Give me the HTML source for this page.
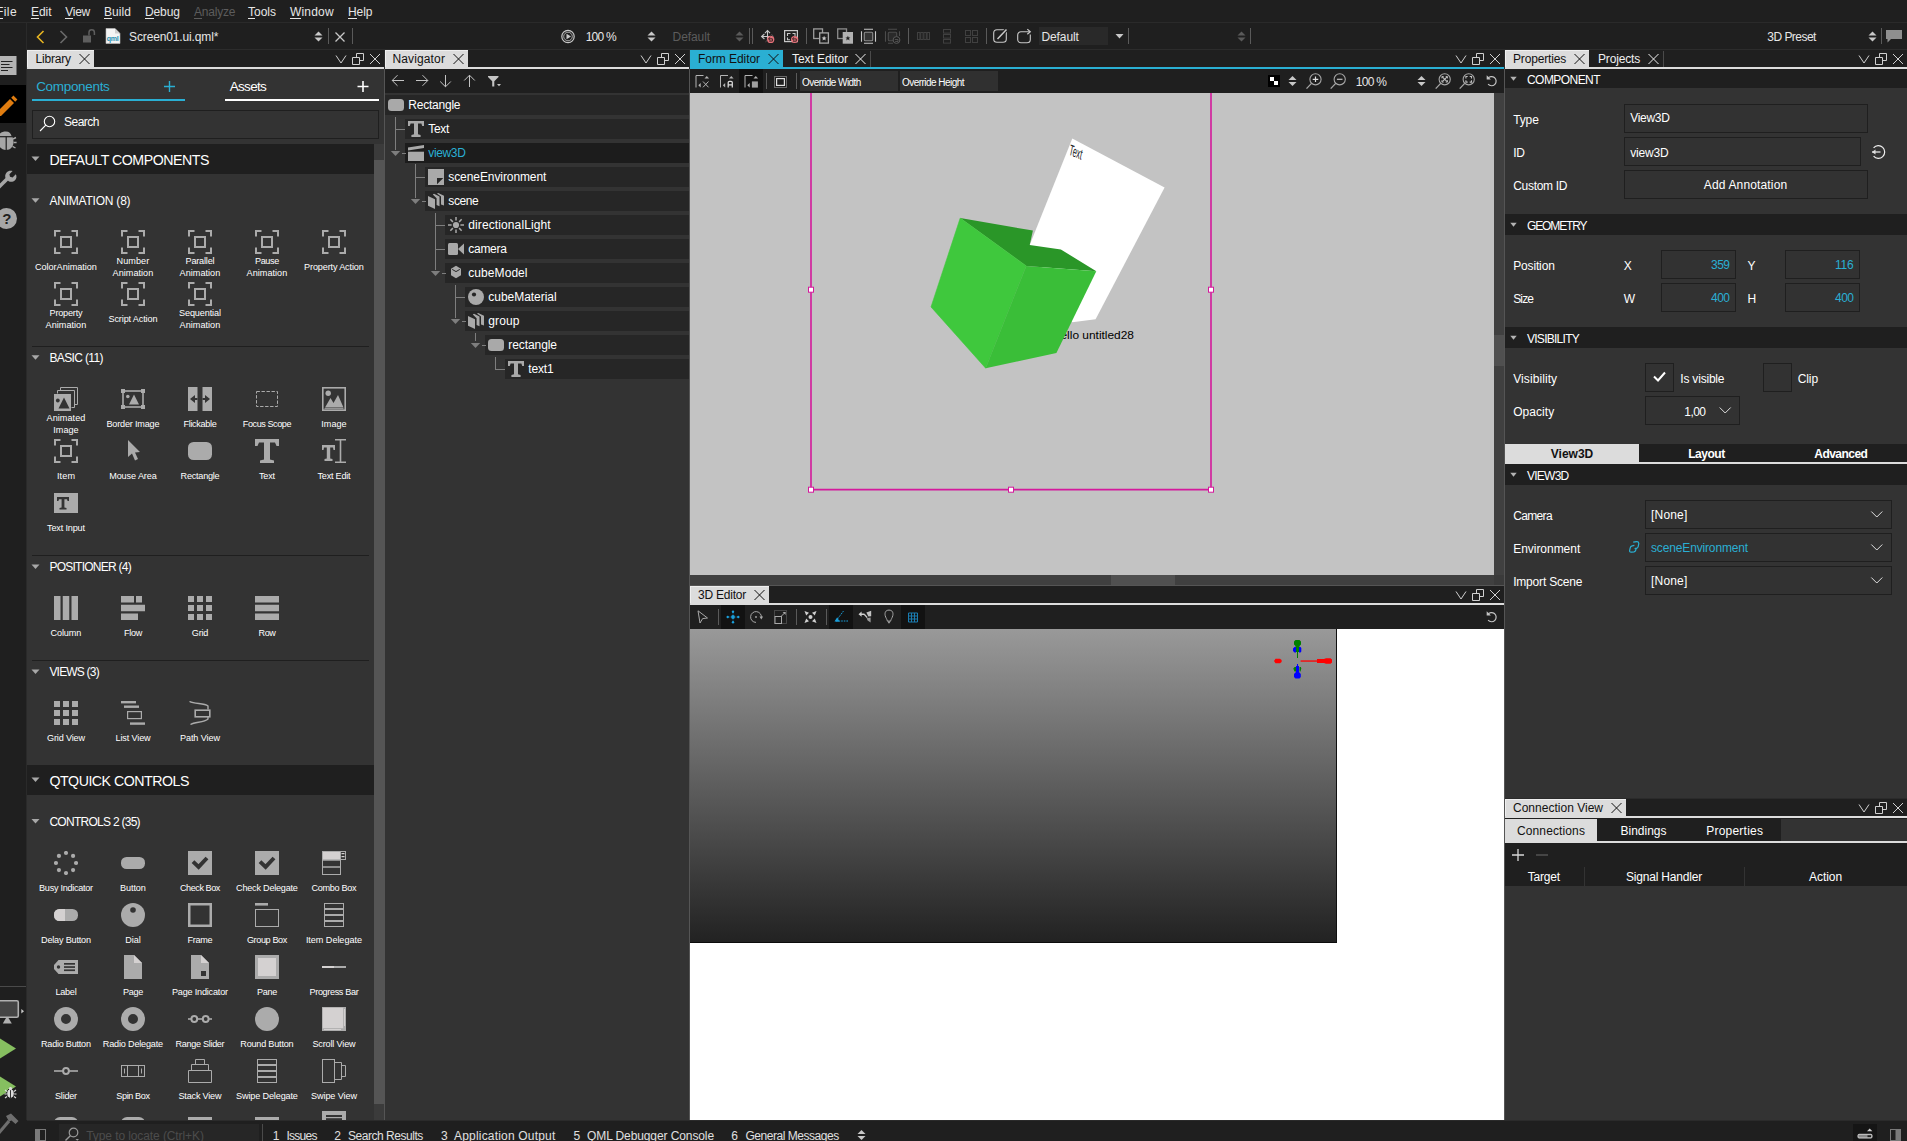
<!DOCTYPE html>
<html lang="en"><head><meta charset="utf-8"><title>Qt Design Studio</title><style>
html,body{margin:0;padding:0;}
body{width:1907px;height:1141px;overflow:hidden;background:#1f1f1f;font-family:"Liberation Sans",sans-serif;font-size:12px;color:#fff;position:relative;}
.a{position:absolute;display:block;box-sizing:border-box;margin:0;padding:0;}
svg{overflow:visible;}
</style></head><body>
<div class="a" style="left:0px;top:0px;width:1907px;height:1141px;background:#1f1f1f;"></div>
<div class="a" style="left:0px;top:22px;width:1907px;height:1px;background:#2a2a2a;"></div>
<div class="a" style="left:27px;top:49px;width:1880px;height:1px;background:#2c2c2c;"></div>
<div class="a" style="left:26px;top:23px;width:1px;height:1097px;background:#2a2a2a;"></div>
<span class="a" style="top:4.0px;font-size:12px;line-height:17px;color:#e6e6e6;white-space:nowrap;letter-spacing:0.416px;left:-4px;">File</span>
<div class="a" style="left:-4px;top:18px;width:7px;height:1px;background:#e6e6e6;"></div>
<span class="a" style="top:4.0px;font-size:12px;line-height:17px;color:#e6e6e6;white-space:nowrap;letter-spacing:-0.069px;left:31px;">Edit</span>
<div class="a" style="left:31px;top:18px;width:8px;height:1px;background:#e6e6e6;"></div>
<span class="a" style="top:4.0px;font-size:12px;line-height:17px;color:#e6e6e6;white-space:nowrap;letter-spacing:-0.248px;left:65.2px;">View</span>
<div class="a" style="left:65.2px;top:18px;width:8px;height:1px;background:#e6e6e6;"></div>
<span class="a" style="top:4.0px;font-size:12px;line-height:17px;color:#e6e6e6;white-space:nowrap;letter-spacing:0.063px;left:104px;">Build</span>
<div class="a" style="left:104px;top:18px;width:8px;height:1px;background:#e6e6e6;"></div>
<span class="a" style="top:4.0px;font-size:12px;line-height:17px;color:#e6e6e6;white-space:nowrap;letter-spacing:-0.112px;left:145px;">Debug</span>
<div class="a" style="left:145px;top:18px;width:9px;height:1px;background:#e6e6e6;"></div>
<span class="a" style="top:4.0px;font-size:12px;line-height:17px;color:#5c5c5c;white-space:nowrap;letter-spacing:-0.213px;left:194px;">Analyze</span>
<div class="a" style="left:194px;top:18px;width:8px;height:1px;background:#5c5c5c;"></div>
<span class="a" style="top:4.0px;font-size:12px;line-height:17px;color:#e6e6e6;white-space:nowrap;letter-spacing:-0.003px;left:248px;">Tools</span>
<div class="a" style="left:248px;top:18px;width:7px;height:1px;background:#e6e6e6;"></div>
<span class="a" style="top:4.0px;font-size:12px;line-height:17px;color:#e6e6e6;white-space:nowrap;letter-spacing:0.187px;left:290px;">Window</span>
<div class="a" style="left:290px;top:18px;width:11px;height:1px;background:#e6e6e6;"></div>
<span class="a" style="top:4.0px;font-size:12px;line-height:17px;color:#e6e6e6;white-space:nowrap;letter-spacing:-0.095px;left:348px;">Help</span>
<div class="a" style="left:348px;top:18px;width:9px;height:1px;background:#e6e6e6;"></div>
<div class="a" style="left:27px;top:50px;width:357px;height:1070px;background:#333333;"></div>
<div class="a" style="left:27px;top:50px;width:357px;height:17px;background:#1f1f1f;"></div>
<div class="a" style="left:27px;top:67px;width:357px;height:2px;background:#dcdcdc;"></div>
<div class="a" style="left:27px;top:50px;width:67px;height:17px;background:#dcdcdc;box-shadow:inset 1px 1px 0 #efefef;"></div>
<span class="a" style="top:51.0px;font-size:12px;line-height:17px;color:#111;white-space:nowrap;letter-spacing:-0.211px;left:35.5px;">Library</span>
<svg class="a" style="left:78px;top:53px;" width="13" height="13" viewBox="0 0 13 13"><g transform="translate(0.5,0.0)"><path d="M1 1 L11 11 M11 1 L1 11" stroke="#111" stroke-width="1" fill="none"/></g></svg>
<svg class="a" style="left:335px;top:53px;" width="12" height="12" viewBox="0 0 12 12"><path d="M1 2.5 L6 10 L11 2.5" stroke="#d0d0d0" stroke-width="1" fill="none"/></svg>
<svg class="a" style="left:352px;top:53px;" width="12" height="12" viewBox="0 0 12 12"><path d="M0.5 4.5 H7.5 V11.5 H0.5 Z M4.5 4.5 V0.5 H11.5 V7.5 H7.5" stroke="#d0d0d0" stroke-width="1" fill="none"/></svg>
<svg class="a" style="left:369px;top:53px;" width="12" height="12" viewBox="0 0 12 12"><path d="M1 1 L11 11 M11 1 L1 11" stroke="#d0d0d0" stroke-width="1" fill="none"/></svg>
<div class="a" style="left:384px;top:50px;width:1px;height:19px;background:#2a2a2a;"></div>
<div class="a" style="left:384px;top:69px;width:1px;height:1051px;background:#555555;"></div>
<div class="a" style="left:385px;top:50px;width:304px;height:1070px;background:#333333;"></div>
<div class="a" style="left:385px;top:50px;width:304px;height:17px;background:#1f1f1f;"></div>
<div class="a" style="left:385px;top:67px;width:304px;height:2px;background:#dcdcdc;"></div>
<div class="a" style="left:385px;top:50px;width:83px;height:17px;background:#dcdcdc;box-shadow:inset 1px 1px 0 #efefef;"></div>
<span class="a" style="top:51.0px;font-size:12px;line-height:17px;color:#111;white-space:nowrap;letter-spacing:0.127px;left:392.5px;">Navigator</span>
<svg class="a" style="left:452px;top:53px;" width="13" height="13" viewBox="0 0 13 13"><g transform="translate(0.5,0.0)"><path d="M1 1 L11 11 M11 1 L1 11" stroke="#111" stroke-width="1" fill="none"/></g></svg>
<svg class="a" style="left:640px;top:53px;" width="12" height="12" viewBox="0 0 12 12"><path d="M1 2.5 L6 10 L11 2.5" stroke="#d0d0d0" stroke-width="1" fill="none"/></svg>
<svg class="a" style="left:657px;top:53px;" width="12" height="12" viewBox="0 0 12 12"><path d="M0.5 4.5 H7.5 V11.5 H0.5 Z M4.5 4.5 V0.5 H11.5 V7.5 H7.5" stroke="#d0d0d0" stroke-width="1" fill="none"/></svg>
<svg class="a" style="left:674px;top:53px;" width="12" height="12" viewBox="0 0 12 12"><path d="M1 1 L11 11 M11 1 L1 11" stroke="#d0d0d0" stroke-width="1" fill="none"/></svg>
<div class="a" style="left:689px;top:50px;width:1px;height:19px;background:#2a2a2a;"></div>
<div class="a" style="left:689px;top:69px;width:1px;height:1051px;background:#555555;"></div>
<div class="a" style="left:690px;top:50px;width:814px;height:536px;background:#1f1f1f;"></div>
<div class="a" style="left:690px;top:50px;width:814px;height:17px;background:#1f1f1f;"></div>
<div class="a" style="left:690px;top:67px;width:814px;height:2px;background:#2aafd3;"></div>
<div class="a" style="left:690px;top:50px;width:93px;height:17px;background:#2aafd3;"></div>
<span class="a" style="top:51.0px;font-size:12px;line-height:17px;color:#111;white-space:nowrap;letter-spacing:-0.062px;left:698px;">Form Editor</span>
<svg class="a" style="left:767px;top:53px;" width="13" height="13" viewBox="0 0 13 13"><g transform="translate(0.5,0.0)"><path d="M1 1 L11 11 M11 1 L1 11" stroke="#111" stroke-width="1" fill="none"/></g></svg>
<div class="a" style="left:870px;top:51px;width:1px;height:16px;background:#4a4a4a;"></div>
<span class="a" style="top:51.0px;font-size:12px;line-height:17px;color:#f0f0f0;white-space:nowrap;letter-spacing:-0.063px;left:792px;">Text Editor</span>
<svg class="a" style="left:854px;top:53px;" width="13" height="13" viewBox="0 0 13 13"><g transform="translate(0.5,0.0)"><path d="M1 1 L11 11 M11 1 L1 11" stroke="#f0f0f0" stroke-width="1" fill="none"/></g></svg>
<svg class="a" style="left:1455px;top:53px;" width="12" height="12" viewBox="0 0 12 12"><path d="M1 2.5 L6 10 L11 2.5" stroke="#d0d0d0" stroke-width="1" fill="none"/></svg>
<svg class="a" style="left:1472px;top:53px;" width="12" height="12" viewBox="0 0 12 12"><path d="M0.5 4.5 H7.5 V11.5 H0.5 Z M4.5 4.5 V0.5 H11.5 V7.5 H7.5" stroke="#d0d0d0" stroke-width="1" fill="none"/></svg>
<svg class="a" style="left:1489px;top:53px;" width="12" height="12" viewBox="0 0 12 12"><path d="M1 1 L11 11 M11 1 L1 11" stroke="#d0d0d0" stroke-width="1" fill="none"/></svg>
<div class="a" style="left:690px;top:93px;width:804px;height:482px;background:#c3c3c3;"></div>
<div class="a" style="left:1494px;top:93px;width:10px;height:482px;background:#404040;"></div>
<div class="a" style="left:690px;top:575px;width:814px;height:10px;background:#404040;"></div>
<div class="a" style="left:1504px;top:50px;width:1px;height:19px;background:#2a2a2a;"></div>
<div class="a" style="left:1504px;top:69px;width:1px;height:1051px;background:#555555;"></div>
<div class="a" style="left:690px;top:585px;width:814px;height:1px;background:#555555;"></div>
<div class="a" style="left:690px;top:586px;width:814px;height:17px;background:#1f1f1f;"></div>
<div class="a" style="left:690px;top:603px;width:814px;height:2px;background:#dcdcdc;"></div>
<div class="a" style="left:690px;top:586px;width:79px;height:17px;background:#dcdcdc;box-shadow:inset 1px 1px 0 #efefef;"></div>
<span class="a" style="top:587.0px;font-size:12px;line-height:17px;color:#111;white-space:nowrap;letter-spacing:-0.225px;left:698px;">3D Editor</span>
<svg class="a" style="left:753px;top:589px;" width="13" height="13" viewBox="0 0 13 13"><g transform="translate(0.5,0.0)"><path d="M1 1 L11 11 M11 1 L1 11" stroke="#111" stroke-width="1" fill="none"/></g></svg>
<svg class="a" style="left:1455px;top:589px;" width="12" height="12" viewBox="0 0 12 12"><path d="M1 2.5 L6 10 L11 2.5" stroke="#d0d0d0" stroke-width="1" fill="none"/></svg>
<svg class="a" style="left:1472px;top:589px;" width="12" height="12" viewBox="0 0 12 12"><path d="M0.5 4.5 H7.5 V11.5 H0.5 Z M4.5 4.5 V0.5 H11.5 V7.5 H7.5" stroke="#d0d0d0" stroke-width="1" fill="none"/></svg>
<svg class="a" style="left:1489px;top:589px;" width="12" height="12" viewBox="0 0 12 12"><path d="M1 1 L11 11 M11 1 L1 11" stroke="#d0d0d0" stroke-width="1" fill="none"/></svg>
<div class="a" style="left:690px;top:605px;width:814px;height:24px;background:#1f1f1f;"></div>
<div class="a" style="left:690px;top:629px;width:814px;height:491px;background:#ffffff;"></div>
<div class="a" style="left:690px;top:629px;width:647px;height:314px;background:linear-gradient(#999999,#222222);border-right:1px solid #101010;border-bottom:1px solid #0c0c0c;"></div>
<div class="a" style="left:1505px;top:50px;width:402px;height:1070px;background:#333333;"></div>
<div class="a" style="left:1505px;top:50px;width:402px;height:17px;background:#1f1f1f;"></div>
<div class="a" style="left:1505px;top:67px;width:402px;height:2px;background:#dcdcdc;"></div>
<div class="a" style="left:1505px;top:50px;width:84px;height:17px;background:#dcdcdc;box-shadow:inset 1px 1px 0 #efefef;"></div>
<span class="a" style="top:51.0px;font-size:12px;line-height:17px;color:#111;white-space:nowrap;letter-spacing:-0.169px;left:1513px;">Properties</span>
<svg class="a" style="left:1573px;top:53px;" width="13" height="13" viewBox="0 0 13 13"><g transform="translate(0.5,0.0)"><path d="M1 1 L11 11 M11 1 L1 11" stroke="#111" stroke-width="1" fill="none"/></g></svg>
<div class="a" style="left:1663px;top:51px;width:1px;height:16px;background:#4a4a4a;"></div>
<span class="a" style="top:51.0px;font-size:12px;line-height:17px;color:#f0f0f0;white-space:nowrap;letter-spacing:-0.168px;left:1598px;">Projects</span>
<svg class="a" style="left:1647px;top:53px;" width="13" height="13" viewBox="0 0 13 13"><g transform="translate(0.5,0.0)"><path d="M1 1 L11 11 M11 1 L1 11" stroke="#f0f0f0" stroke-width="1" fill="none"/></g></svg>
<svg class="a" style="left:1858px;top:53px;" width="12" height="12" viewBox="0 0 12 12"><path d="M1 2.5 L6 10 L11 2.5" stroke="#d0d0d0" stroke-width="1" fill="none"/></svg>
<svg class="a" style="left:1875px;top:53px;" width="12" height="12" viewBox="0 0 12 12"><path d="M0.5 4.5 H7.5 V11.5 H0.5 Z M4.5 4.5 V0.5 H11.5 V7.5 H7.5" stroke="#d0d0d0" stroke-width="1" fill="none"/></svg>
<svg class="a" style="left:1892px;top:53px;" width="12" height="12" viewBox="0 0 12 12"><path d="M1 1 L11 11 M11 1 L1 11" stroke="#d0d0d0" stroke-width="1" fill="none"/></svg>
<div class="a" style="left:1505px;top:799px;width:402px;height:17px;background:#1f1f1f;"></div>
<div class="a" style="left:1505px;top:816px;width:402px;height:2px;background:#dcdcdc;"></div>
<div class="a" style="left:1505px;top:799px;width:121px;height:17px;background:#dcdcdc;box-shadow:inset 1px 1px 0 #efefef;"></div>
<span class="a" style="top:800.0px;font-size:12px;line-height:17px;color:#111;white-space:nowrap;letter-spacing:0.011px;left:1513px;">Connection View</span>
<svg class="a" style="left:1610px;top:802px;" width="13" height="13" viewBox="0 0 13 13"><g transform="translate(0.5,0.0)"><path d="M1 1 L11 11 M11 1 L1 11" stroke="#111" stroke-width="1" fill="none"/></g></svg>
<svg class="a" style="left:1858px;top:802px;" width="12" height="12" viewBox="0 0 12 12"><path d="M1 2.5 L6 10 L11 2.5" stroke="#d0d0d0" stroke-width="1" fill="none"/></svg>
<svg class="a" style="left:1875px;top:802px;" width="12" height="12" viewBox="0 0 12 12"><path d="M0.5 4.5 H7.5 V11.5 H0.5 Z M4.5 4.5 V0.5 H11.5 V7.5 H7.5" stroke="#d0d0d0" stroke-width="1" fill="none"/></svg>
<svg class="a" style="left:1892px;top:802px;" width="12" height="12" viewBox="0 0 12 12"><path d="M1 1 L11 11 M11 1 L1 11" stroke="#d0d0d0" stroke-width="1" fill="none"/></svg>
<div class="a" style="left:27px;top:1120px;width:1880px;height:21px;background:#1f1f1f;"></div>
<span class="a" style="top:77.3px;font-size:13.5px;line-height:19px;color:#2aafd3;white-space:nowrap;letter-spacing:-0.324px;left:36.2px;">Components</span>
<div class="a" style="left:32px;top:99px;width:153px;height:2px;background:#2aafd3;"></div>
<svg class="a" style="left:164px;top:81px;" width="11" height="11" viewBox="0 0 11 11"><path d="M5.5 0 V11 M0 5.5 H11" stroke="#2aafd3" stroke-width="1.4"/></svg>
<span class="a" style="top:77.3px;font-size:13.5px;line-height:19px;color:#fff;white-space:nowrap;letter-spacing:-0.669px;left:229.7px;">Assets</span>
<div class="a" style="left:225px;top:99px;width:154px;height:2px;background:#fff;"></div>
<svg class="a" style="left:357px;top:81px;" width="12" height="12" viewBox="0 0 12 12"><g transform="translate(0.5,0)"><path d="M5.5 0 V11 M0 5.5 H11" stroke="#fff" stroke-width="1.6"/></g></svg>
<div class="a" style="left:32px;top:110px;width:347px;height:29px;background:#333333;border:1px solid #1f1f1f;"></div>
<svg class="a" style="left:39px;top:114px;" width="18" height="18" viewBox="0 0 18 18"><circle cx="10.5" cy="7.5" r="5.2" stroke="#fff" stroke-width="1.1" fill="none"/><path d="M6.8 11.2 L1 17" stroke="#fff" stroke-width="1.1"/></svg>
<span class="a" style="top:113.8px;font-size:12px;line-height:17px;color:#fff;white-space:nowrap;letter-spacing:-0.504px;left:64px;">Search</span>
<div class="a" style="left:374px;top:144px;width:10px;height:976px;background:#3b3b3b;"></div>
<div class="a" style="left:374px;top:160px;width:10px;height:944px;background:#555555;"></div>
<div class="a" style="left:27px;top:144px;width:347px;height:30px;background:#1f1f1f;"></div>
<svg class="a" style="left:31px;top:156px;" width="9" height="6" viewBox="0 0 9 6"><g transform="translate(0.5,0.5)"><path d="M0 0 H8 L4 4.5 Z" fill="#a8a8a8"/></g></svg>
<span class="a" style="top:149.6px;font-size:14.2px;line-height:20px;color:#fff;white-space:nowrap;letter-spacing:-0.482px;left:49.4px;">DEFAULT COMPONENTS</span>
<svg class="a" style="left:31px;top:198px;" width="9" height="6" viewBox="0 0 9 6"><g transform="translate(0.5,0.3)"><path d="M0 0 H8 L4 4.5 Z" fill="#a8a8a8"/></g></svg>
<span class="a" style="top:192.9px;font-size:12px;line-height:17px;color:#fff;white-space:nowrap;letter-spacing:-0.214px;left:49.4px;">ANIMATION (8)</span>
<svg class="a" style="left:54px;top:230px;overflow:hidden;" width="24" height="24" viewBox="0 0 24 24"><path d="M6.5 1 H1 V6.5" stroke="#ababab" stroke-width="2" fill="none"/><path d="M17.5 1 H23 V6.5" stroke="#ababab" stroke-width="2" fill="none"/><path d="M6.5 23 H1 V17.5" stroke="#ababab" stroke-width="2" fill="none"/><path d="M17.5 23 H23 V17.5" stroke="#ababab" stroke-width="2" fill="none"/><rect x="7" y="7" width="10" height="10" stroke="#ababab" stroke-width="2" fill="none"/></svg>
<span class="a" style="top:261.4px;font-size:9.1px;line-height:13px;color:#fff;white-space:nowrap;letter-spacing:-0.027px;left:35.0px;">ColorAnimation</span>
<svg class="a" style="left:121px;top:230px;overflow:hidden;" width="24" height="24" viewBox="0 0 24 24"><path d="M6.5 1 H1 V6.5" stroke="#ababab" stroke-width="2" fill="none"/><path d="M17.5 1 H23 V6.5" stroke="#ababab" stroke-width="2" fill="none"/><path d="M6.5 23 H1 V17.5" stroke="#ababab" stroke-width="2" fill="none"/><path d="M17.5 23 H23 V17.5" stroke="#ababab" stroke-width="2" fill="none"/><rect x="7" y="7" width="10" height="10" stroke="#ababab" stroke-width="2" fill="none"/></svg>
<span class="a" style="top:255.0px;font-size:9.1px;line-height:13px;color:#fff;white-space:nowrap;letter-spacing:0.091px;left:116.5px;">Number</span>
<span class="a" style="top:267.2px;font-size:9.1px;line-height:13px;color:#fff;white-space:nowrap;letter-spacing:0.025px;left:112.6px;">Animation</span>
<svg class="a" style="left:188px;top:230px;overflow:hidden;" width="24" height="24" viewBox="0 0 24 24"><path d="M6.5 1 H1 V6.5" stroke="#ababab" stroke-width="2" fill="none"/><path d="M17.5 1 H23 V6.5" stroke="#ababab" stroke-width="2" fill="none"/><path d="M6.5 23 H1 V17.5" stroke="#ababab" stroke-width="2" fill="none"/><path d="M17.5 23 H23 V17.5" stroke="#ababab" stroke-width="2" fill="none"/><rect x="7" y="7" width="10" height="10" stroke="#ababab" stroke-width="2" fill="none"/></svg>
<span class="a" style="top:255.0px;font-size:9.1px;line-height:13px;color:#fff;white-space:nowrap;letter-spacing:-0.179px;left:185.5px;">Parallel</span>
<span class="a" style="top:267.2px;font-size:9.1px;line-height:13px;color:#fff;white-space:nowrap;letter-spacing:0.025px;left:179.6px;">Animation</span>
<svg class="a" style="left:255px;top:230px;overflow:hidden;" width="24" height="24" viewBox="0 0 24 24"><path d="M6.5 1 H1 V6.5" stroke="#ababab" stroke-width="2" fill="none"/><path d="M17.5 1 H23 V6.5" stroke="#ababab" stroke-width="2" fill="none"/><path d="M6.5 23 H1 V17.5" stroke="#ababab" stroke-width="2" fill="none"/><path d="M17.5 23 H23 V17.5" stroke="#ababab" stroke-width="2" fill="none"/><rect x="7" y="7" width="10" height="10" stroke="#ababab" stroke-width="2" fill="none"/></svg>
<span class="a" style="top:255.0px;font-size:9.1px;line-height:13px;color:#fff;white-space:nowrap;letter-spacing:-0.375px;left:255.0px;">Pause</span>
<span class="a" style="top:267.2px;font-size:9.1px;line-height:13px;color:#fff;white-space:nowrap;letter-spacing:0.025px;left:246.6px;">Animation</span>
<svg class="a" style="left:322px;top:230px;overflow:hidden;" width="24" height="24" viewBox="0 0 24 24"><path d="M6.5 1 H1 V6.5" stroke="#ababab" stroke-width="2" fill="none"/><path d="M17.5 1 H23 V6.5" stroke="#ababab" stroke-width="2" fill="none"/><path d="M6.5 23 H1 V17.5" stroke="#ababab" stroke-width="2" fill="none"/><path d="M17.5 23 H23 V17.5" stroke="#ababab" stroke-width="2" fill="none"/><rect x="7" y="7" width="10" height="10" stroke="#ababab" stroke-width="2" fill="none"/></svg>
<span class="a" style="top:261.4px;font-size:9.1px;line-height:13px;color:#fff;white-space:nowrap;letter-spacing:-0.145px;left:304.1px;">Property Action</span>
<svg class="a" style="left:54px;top:282px;overflow:hidden;" width="24" height="24" viewBox="0 0 24 24"><path d="M6.5 1 H1 V6.5" stroke="#ababab" stroke-width="2" fill="none"/><path d="M17.5 1 H23 V6.5" stroke="#ababab" stroke-width="2" fill="none"/><path d="M6.5 23 H1 V17.5" stroke="#ababab" stroke-width="2" fill="none"/><path d="M17.5 23 H23 V17.5" stroke="#ababab" stroke-width="2" fill="none"/><rect x="7" y="7" width="10" height="10" stroke="#ababab" stroke-width="2" fill="none"/></svg>
<span class="a" style="top:307.0px;font-size:9.1px;line-height:13px;color:#fff;white-space:nowrap;letter-spacing:-0.186px;left:49.5px;">Property</span>
<span class="a" style="top:319.2px;font-size:9.1px;line-height:13px;color:#fff;white-space:nowrap;letter-spacing:0.025px;left:45.6px;">Animation</span>
<svg class="a" style="left:121px;top:282px;overflow:hidden;" width="24" height="24" viewBox="0 0 24 24"><path d="M6.5 1 H1 V6.5" stroke="#ababab" stroke-width="2" fill="none"/><path d="M17.5 1 H23 V6.5" stroke="#ababab" stroke-width="2" fill="none"/><path d="M6.5 23 H1 V17.5" stroke="#ababab" stroke-width="2" fill="none"/><path d="M17.5 23 H23 V17.5" stroke="#ababab" stroke-width="2" fill="none"/><rect x="7" y="7" width="10" height="10" stroke="#ababab" stroke-width="2" fill="none"/></svg>
<span class="a" style="top:313.4px;font-size:9.1px;line-height:13px;color:#fff;white-space:nowrap;letter-spacing:-0.132px;left:108.5px;">Script Action</span>
<svg class="a" style="left:188px;top:282px;overflow:hidden;" width="24" height="24" viewBox="0 0 24 24"><path d="M6.5 1 H1 V6.5" stroke="#ababab" stroke-width="2" fill="none"/><path d="M17.5 1 H23 V6.5" stroke="#ababab" stroke-width="2" fill="none"/><path d="M6.5 23 H1 V17.5" stroke="#ababab" stroke-width="2" fill="none"/><path d="M17.5 23 H23 V17.5" stroke="#ababab" stroke-width="2" fill="none"/><rect x="7" y="7" width="10" height="10" stroke="#ababab" stroke-width="2" fill="none"/></svg>
<span class="a" style="top:307.0px;font-size:9.1px;line-height:13px;color:#fff;white-space:nowrap;letter-spacing:-0.113px;left:179.0px;">Sequential</span>
<span class="a" style="top:319.2px;font-size:9.1px;line-height:13px;color:#fff;white-space:nowrap;letter-spacing:0.025px;left:179.6px;">Animation</span>
<div class="a" style="left:32px;top:346px;width:337px;height:1px;background:#1f1f1f;"></div>
<svg class="a" style="left:31px;top:355px;" width="9" height="6" viewBox="0 0 9 6"><g transform="translate(0.5,0.2)"><path d="M0 0 H8 L4 4.5 Z" fill="#a8a8a8"/></g></svg>
<span class="a" style="top:349.8px;font-size:12px;line-height:17px;color:#fff;white-space:nowrap;letter-spacing:-0.629px;left:49.4px;">BASIC (11)</span>
<svg class="a" style="left:54px;top:387px;overflow:hidden;" width="24" height="24" viewBox="0 0 24 24"><path d="M6.5 3.5 V0.5 H23.5 V17.5 H20.5" stroke="#ababab" stroke-width="1" fill="none"/><path d="M3.5 6.5 V3.5 H20.5 V20.5 H17.5" stroke="#ababab" stroke-width="1" fill="none"/><rect x="0" y="7" width="17" height="17" fill="#ababab"/><path d="M4.5 21.5 L10 10.5 L15.5 21.5 Z" fill="#333333"/><circle cx="3.8" cy="13.5" r="1.9" fill="#333333"/></svg>
<span class="a" style="top:412.0px;font-size:9.1px;line-height:13px;color:#fff;white-space:nowrap;letter-spacing:0.069px;left:46.5px;">Animated</span>
<span class="a" style="top:424.2px;font-size:9.1px;line-height:13px;color:#fff;white-space:nowrap;letter-spacing:0.008px;left:53.3px;">Image</span>
<svg class="a" style="left:121px;top:387px;overflow:hidden;" width="24" height="24" viewBox="0 0 24 24"><rect x="2" y="4" width="20" height="16" stroke="#ababab" stroke-width="1.6" fill="none"/><rect x="0" y="2" width="4" height="4" fill="#ababab"/><rect x="20" y="2" width="4" height="4" fill="#ababab"/><rect x="0" y="18" width="4" height="4" fill="#ababab"/><rect x="20" y="18" width="4" height="4" fill="#ababab"/><path d="M8 17.5 L13 7.5 L18 17.5 Z" fill="#ababab"/><circle cx="6.8" cy="9.5" r="1.8" fill="#ababab"/></svg>
<span class="a" style="top:418.4px;font-size:9.1px;line-height:13px;color:#fff;white-space:nowrap;letter-spacing:-0.191px;left:106.5px;">Border Image</span>
<svg class="a" style="left:188px;top:387px;overflow:hidden;" width="24" height="24" viewBox="0 0 24 24"><rect x="0" y="0" width="9.5" height="24" fill="#ababab"/><rect x="14.5" y="0" width="9.5" height="24" fill="#ababab"/><path d="M2 12 L7 8 V11 H9.5 V13 H7 V16 Z" fill="#333333"/><path d="M22 12 L17 8 V11 H14.5 V13 H17 V16 Z" fill="#333333"/></svg>
<span class="a" style="top:418.4px;font-size:9.1px;line-height:13px;color:#fff;white-space:nowrap;letter-spacing:-0.334px;left:183.5px;">Flickable</span>
<svg class="a" style="left:255px;top:387px;overflow:hidden;" width="24" height="24" viewBox="0 0 24 24"><rect x="1.5" y="4.5" width="21" height="15" stroke="#ababab" stroke-width="1" stroke-dasharray="3.4 1.6" fill="none"/></svg>
<span class="a" style="top:418.4px;font-size:9.1px;line-height:13px;color:#fff;white-space:nowrap;letter-spacing:-0.442px;left:242.8px;">Focus Scope</span>
<svg class="a" style="left:322px;top:387px;overflow:hidden;" width="24" height="24" viewBox="0 0 24 24"><rect x="0.8" y="0.8" width="22.4" height="22.4" stroke="#ababab" stroke-width="1.6" fill="none"/><path d="M3 20.5 L8.5 11 L11.5 16 L16 8 L21.5 20.5 Z" fill="#ababab"/><circle cx="6.2" cy="6.2" r="2.7" fill="#ababab"/><rect x="2.5" y="21.2" width="19" height="1" fill="#ababab"/></svg>
<span class="a" style="top:418.4px;font-size:9.1px;line-height:13px;color:#fff;white-space:nowrap;letter-spacing:0.008px;left:321.3px;">Image</span>
<svg class="a" style="left:54px;top:439px;overflow:hidden;" width="24" height="24" viewBox="0 0 24 24"><path d="M6.5 1 H1 V6.5" stroke="#ababab" stroke-width="2" fill="none"/><path d="M17.5 1 H23 V6.5" stroke="#ababab" stroke-width="2" fill="none"/><path d="M6.5 23 H1 V17.5" stroke="#ababab" stroke-width="2" fill="none"/><path d="M17.5 23 H23 V17.5" stroke="#ababab" stroke-width="2" fill="none"/><rect x="7" y="7" width="10" height="10" stroke="#ababab" stroke-width="2" fill="none"/></svg>
<span class="a" style="top:470.4px;font-size:9.1px;line-height:13px;color:#fff;white-space:nowrap;letter-spacing:0.138px;left:56.9px;">Item</span>
<svg class="a" style="left:121px;top:439px;overflow:hidden;" width="24" height="24" viewBox="0 0 24 24"><path d="M7 1 V18 L11 14.5 L14 21.5 L17 20 L14 13.5 L19 13 Z" fill="#ababab"/></svg>
<span class="a" style="top:470.4px;font-size:9.1px;line-height:13px;color:#fff;white-space:nowrap;letter-spacing:-0.100px;left:109.2px;">Mouse Area</span>
<svg class="a" style="left:188px;top:439px;overflow:hidden;" width="24" height="24" viewBox="0 0 24 24"><rect x="0" y="3" width="24" height="18" rx="5.5" fill="#ababab"/></svg>
<span class="a" style="top:470.4px;font-size:9.1px;line-height:13px;color:#fff;white-space:nowrap;letter-spacing:-0.243px;left:180.6px;">Rectangle</span>
<svg class="a" style="left:255px;top:439px;overflow:hidden;" width="24" height="24" viewBox="0 0 24 24"><path d="M0 0 H24 V7 H21.5 L20 3.5 H15 V20.5 L19 21.5 V24 H5 V21.5 L9 20.5 V3.5 H4 L2.5 7 H0 Z" fill="#ababab"/></svg>
<span class="a" style="top:470.4px;font-size:9.1px;line-height:13px;color:#fff;white-space:nowrap;letter-spacing:-0.184px;left:259.0px;">Text</span>
<svg class="a" style="left:322px;top:439px;overflow:hidden;" width="24" height="24" viewBox="0 0 24 24"><path d="M0 6 H13 V11 H11.5 L11 8.5 H8.2 V19.5 L10.5 20 V22 H2.5 V20 L4.8 19.5 V8.5 H2 L1.5 11 H0 Z" fill="#ababab"/><path d="M13 0.8 H24 M13 23.2 H24 M18.5 0.8 V23.2" stroke="#ababab" stroke-width="1.6" fill="none"/></svg>
<span class="a" style="top:470.4px;font-size:9.1px;line-height:13px;color:#fff;white-space:nowrap;letter-spacing:-0.222px;left:317.5px;">Text Edit</span>
<svg class="a" style="left:54px;top:491px;overflow:hidden;" width="24" height="24" viewBox="0 0 24 24"><rect x="0" y="2" width="24" height="20" fill="#ababab"/><path d="M3 6 H15 V10 H13.6 L13 8.2 H10.4 V16.4 L12.5 17 V18.5 H5.5 V17 L7.6 16.4 V8.2 H5 L4.4 10 H3 Z" fill="#333333"/></svg>
<span class="a" style="top:522.4px;font-size:9.1px;line-height:13px;color:#fff;white-space:nowrap;letter-spacing:-0.157px;left:47.0px;">Text Input</span>
<div class="a" style="left:32px;top:555px;width:337px;height:1px;background:#1f1f1f;"></div>
<svg class="a" style="left:31px;top:564px;" width="9" height="6" viewBox="0 0 9 6"><g transform="translate(0.5,0.5)"><path d="M0 0 H8 L4 4.5 Z" fill="#a8a8a8"/></g></svg>
<span class="a" style="top:559.1px;font-size:12px;line-height:17px;color:#fff;white-space:nowrap;letter-spacing:-0.751px;left:49.4px;">POSITIONER (4)</span>
<svg class="a" style="left:54px;top:596px;overflow:hidden;" width="24" height="24" viewBox="0 0 24 24"><rect x="0" y="0" width="6.5" height="24" fill="#ababab"/><rect x="8.75" y="0" width="6.5" height="24" fill="#ababab"/><rect x="17.5" y="0" width="6.5" height="24" fill="#ababab"/></svg>
<span class="a" style="top:627.4px;font-size:9.1px;line-height:13px;color:#fff;white-space:nowrap;letter-spacing:-0.091px;left:50.5px;">Column</span>
<svg class="a" style="left:121px;top:596px;overflow:hidden;" width="24" height="24" viewBox="0 0 24 24"><rect x="0" y="0" width="13" height="6.5" fill="#ababab"/><rect x="15" y="0" width="6" height="6.5" fill="#ababab"/><rect x="0" y="8.75" width="24" height="6.5" fill="#ababab"/><rect x="0" y="17.5" width="17" height="6.5" fill="#ababab"/></svg>
<span class="a" style="top:627.4px;font-size:9.1px;line-height:13px;color:#fff;white-space:nowrap;letter-spacing:-0.292px;left:124.0px;">Flow</span>
<svg class="a" style="left:188px;top:596px;overflow:hidden;" width="24" height="24" viewBox="0 0 24 24"><rect x="0" y="0" width="6" height="6" fill="#ababab"/><rect x="0" y="9" width="6" height="6" fill="#ababab"/><rect x="0" y="18" width="6" height="6" fill="#ababab"/><rect x="9" y="0" width="6" height="6" fill="#ababab"/><rect x="9" y="9" width="6" height="6" fill="#ababab"/><rect x="9" y="18" width="6" height="6" fill="#ababab"/><rect x="18" y="0" width="6" height="6" fill="#ababab"/><rect x="18" y="9" width="6" height="6" fill="#ababab"/><rect x="18" y="18" width="6" height="6" fill="#ababab"/></svg>
<span class="a" style="top:627.4px;font-size:9.1px;line-height:13px;color:#fff;white-space:nowrap;letter-spacing:-0.210px;left:191.8px;">Grid</span>
<svg class="a" style="left:255px;top:596px;overflow:hidden;" width="24" height="24" viewBox="0 0 24 24"><rect x="0" y="0" width="24" height="6.5" fill="#ababab"/><rect x="0" y="8.75" width="24" height="6.5" fill="#ababab"/><rect x="0" y="17.5" width="24" height="6.5" fill="#ababab"/></svg>
<span class="a" style="top:627.4px;font-size:9.1px;line-height:13px;color:#fff;white-space:nowrap;letter-spacing:-0.418px;left:258.5px;">Row</span>
<div class="a" style="left:32px;top:660px;width:337px;height:1px;background:#1f1f1f;"></div>
<svg class="a" style="left:31px;top:669px;" width="9" height="6" viewBox="0 0 9 6"><g transform="translate(0.5,0.4)"><path d="M0 0 H8 L4 4.5 Z" fill="#a8a8a8"/></g></svg>
<span class="a" style="top:664.0px;font-size:12px;line-height:17px;color:#fff;white-space:nowrap;letter-spacing:-0.797px;left:49.4px;">VIEWS (3)</span>
<svg class="a" style="left:54px;top:701px;overflow:hidden;" width="24" height="24" viewBox="0 0 24 24"><rect x="0" y="0" width="6" height="6" fill="#ababab"/><rect x="0" y="9" width="6" height="6" fill="#ababab"/><rect x="0" y="18" width="6" height="6" fill="#ababab"/><rect x="9" y="0" width="6" height="6" fill="#ababab"/><rect x="9" y="9" width="6" height="6" fill="#ababab"/><rect x="9" y="18" width="6" height="6" fill="#ababab"/><rect x="18" y="0" width="6" height="6" fill="#ababab"/><rect x="18" y="9" width="6" height="6" fill="#ababab"/><rect x="18" y="18" width="6" height="6" fill="#ababab"/></svg>
<span class="a" style="top:732.4px;font-size:9.1px;line-height:13px;color:#fff;white-space:nowrap;letter-spacing:-0.154px;left:47.0px;">Grid View</span>
<svg class="a" style="left:121px;top:701px;overflow:hidden;" width="24" height="24" viewBox="0 0 24 24"><rect x="0" y="0" width="15" height="2.4" fill="#ababab"/><rect x="3" y="4.5" width="15" height="2.4" fill="#ababab"/><rect x="6.6" y="10.6" width="13.8" height="7" stroke="#ababab" stroke-width="1.2" fill="none"/><rect x="9" y="21.4" width="15" height="2.4" fill="#ababab"/></svg>
<span class="a" style="top:732.4px;font-size:9.1px;line-height:13px;color:#fff;white-space:nowrap;letter-spacing:-0.139px;left:115.5px;">List View</span>
<svg class="a" style="left:188px;top:701px;overflow:hidden;" width="24" height="24" viewBox="0 0 24 24"><path d="M1.5 0.5 C7 3.5 16 1.5 20 5 V8.5 M20 16 V18 C16 22 7 20.5 2.5 23.5" stroke="#ababab" stroke-width="1.4" fill="none"/><rect x="7.2" y="9.2" width="14.6" height="6.6" stroke="#ababab" stroke-width="1.6" fill="none"/></svg>
<span class="a" style="top:732.4px;font-size:9.1px;line-height:13px;color:#fff;white-space:nowrap;letter-spacing:-0.102px;left:180.0px;">Path View</span>
<div class="a" style="left:27px;top:765px;width:347px;height:30px;background:#1f1f1f;"></div>
<svg class="a" style="left:31px;top:777px;" width="9" height="6" viewBox="0 0 9 6"><g transform="translate(0.5,0.5)"><path d="M0 0 H8 L4 4.5 Z" fill="#a8a8a8"/></g></svg>
<span class="a" style="top:770.6px;font-size:14.2px;line-height:20px;color:#fff;white-space:nowrap;letter-spacing:-0.494px;left:49.4px;">QTQUICK CONTROLS</span>
<svg class="a" style="left:31px;top:819px;" width="9" height="6" viewBox="0 0 9 6"><g transform="translate(0.5,0.0)"><path d="M0 0 H8 L4 4.5 Z" fill="#a8a8a8"/></g></svg>
<span class="a" style="top:813.6px;font-size:12px;line-height:17px;color:#fff;white-space:nowrap;letter-spacing:-0.724px;left:49.4px;">CONTROLS 2 (35)</span>
<svg class="a" style="left:54px;top:851px;overflow:hidden;" width="24" height="24" viewBox="0 0 24 24"><circle cx="12.00" cy="2.00" r="2.1" fill="#ababab"/><circle cx="19.07" cy="4.93" r="2.1" fill="#ababab"/><circle cx="22.00" cy="12.00" r="2.1" fill="#ababab"/><circle cx="19.07" cy="19.07" r="2.1" fill="#ababab"/><circle cx="12.00" cy="22.00" r="2.1" fill="#ababab"/><circle cx="4.93" cy="19.07" r="2.1" fill="#ababab"/><circle cx="2.00" cy="12.00" r="2.1" fill="#ababab"/><circle cx="4.93" cy="4.93" r="2.1" fill="#ababab"/></svg>
<span class="a" style="top:882.4px;font-size:9.1px;line-height:13px;color:#fff;white-space:nowrap;letter-spacing:-0.287px;left:39.1px;">Busy Indicator</span>
<svg class="a" style="left:121px;top:851px;overflow:hidden;" width="24" height="24" viewBox="0 0 24 24"><rect x="0" y="6" width="24" height="12" rx="5.5" fill="#ababab"/></svg>
<span class="a" style="top:882.4px;font-size:9.1px;line-height:13px;color:#fff;white-space:nowrap;letter-spacing:-0.080px;left:120.0px;">Button</span>
<svg class="a" style="left:188px;top:851px;overflow:hidden;" width="24" height="24" viewBox="0 0 24 24"><rect x="0" y="0" width="24" height="24" fill="#ababab"/><path d="M5 10.6 L10.6 15.9 L19 7" stroke="#333333" stroke-width="3.9" fill="none"/></svg>
<span class="a" style="top:882.4px;font-size:9.1px;line-height:13px;color:#fff;white-space:nowrap;letter-spacing:-0.458px;left:180.0px;">Check Box</span>
<svg class="a" style="left:255px;top:851px;overflow:hidden;" width="24" height="24" viewBox="0 0 24 24"><rect x="0" y="0" width="24" height="24" fill="#ababab"/><path d="M5 10.6 L10.6 15.9 L19 7" stroke="#333333" stroke-width="3.9" fill="none"/></svg>
<span class="a" style="top:882.4px;font-size:9.1px;line-height:13px;color:#fff;white-space:nowrap;letter-spacing:-0.223px;left:236.1px;">Check Delegate</span>
<svg class="a" style="left:322px;top:851px;overflow:hidden;" width="24" height="24" viewBox="0 0 24 24"><rect x="0.5" y="0.5" width="18" height="8.5" fill="#d4d1d1" stroke="#ababab" stroke-width="1"/><rect x="0.5" y="9" width="18" height="7" fill="none" stroke="#ababab" stroke-width="1"/><rect x="0.5" y="16" width="18" height="7.5" fill="none" stroke="#ababab" stroke-width="1"/><rect x="18.5" y="0.5" width="5" height="8" fill="none" stroke="#ababab" stroke-width="1"/><rect x="19.5" y="2" width="3" height="1.2" fill="#d4d1d1"/><rect x="19.5" y="5" width="3" height="1.2" fill="#d4d1d1"/></svg>
<span class="a" style="top:882.4px;font-size:9.1px;line-height:13px;color:#fff;white-space:nowrap;letter-spacing:-0.297px;left:311.5px;">Combo Box</span>
<svg class="a" style="left:54px;top:903px;overflow:hidden;" width="24" height="24" viewBox="0 0 24 24"><rect x="0" y="6" width="24" height="12" rx="5.5" fill="#ababab"/><path d="M5.5 6 H11 V18 H5.5 A5.5 5.5 0 0 1 0 12.5 V11.5 A5.5 5.5 0 0 1 5.5 6 Z" fill="#d4d1d1"/></svg>
<span class="a" style="top:934.4px;font-size:9.1px;line-height:13px;color:#fff;white-space:nowrap;letter-spacing:-0.187px;left:41.0px;">Delay Button</span>
<svg class="a" style="left:121px;top:903px;overflow:hidden;" width="24" height="24" viewBox="0 0 24 24"><circle cx="12" cy="12" r="12" fill="#ababab"/><circle cx="12" cy="7" r="2.8" fill="#333333"/></svg>
<span class="a" style="top:934.4px;font-size:9.1px;line-height:13px;color:#fff;white-space:nowrap;letter-spacing:-0.080px;left:125.3px;">Dial</span>
<svg class="a" style="left:188px;top:903px;overflow:hidden;" width="24" height="24" viewBox="0 0 24 24"><rect x="1.25" y="1.25" width="21.5" height="21.5" stroke="#ababab" stroke-width="2.5" fill="none"/></svg>
<span class="a" style="top:934.4px;font-size:9.1px;line-height:13px;color:#fff;white-space:nowrap;letter-spacing:-0.273px;left:187.5px;">Frame</span>
<svg class="a" style="left:255px;top:903px;overflow:hidden;" width="24" height="24" viewBox="0 0 24 24"><rect x="0" y="0" width="13" height="2.6" fill="#ababab"/><rect x="0.5" y="6.5" width="23" height="17" stroke="#ababab" stroke-width="1" fill="none"/></svg>
<span class="a" style="top:934.4px;font-size:9.1px;line-height:13px;color:#fff;white-space:nowrap;letter-spacing:-0.380px;left:246.9px;">Group Box</span>
<svg class="a" style="left:322px;top:903px;overflow:hidden;" width="24" height="24" viewBox="0 0 24 24"><rect x="2.5" y="0.5" width="19" height="5" stroke="#ababab" stroke-width="1" fill="none"/><rect x="2.5" y="6.5" width="19" height="5" stroke="#ababab" stroke-width="1" fill="none"/><rect x="2.5" y="12.5" width="19" height="5" stroke="#ababab" stroke-width="1" fill="none"/><rect x="2.5" y="18.5" width="19" height="5" stroke="#ababab" stroke-width="1" fill="none"/></svg>
<span class="a" style="top:934.4px;font-size:9.1px;line-height:13px;color:#fff;white-space:nowrap;letter-spacing:-0.047px;left:305.9px;">Item Delegate</span>
<svg class="a" style="left:54px;top:955px;overflow:hidden;" width="24" height="24" viewBox="0 0 24 24"><path d="M0 10 L4.5 5 H24 V19 H4.5 L0 14 Z" fill="#ababab"/><circle cx="4.5" cy="12" r="1.7" fill="#333333"/><rect x="10" y="8" width="11" height="1.7" fill="#333333"/><rect x="10" y="11.2" width="11" height="1.7" fill="#333333"/><rect x="10" y="14.4" width="11" height="1.7" fill="#333333"/></svg>
<span class="a" style="top:986.4px;font-size:9.1px;line-height:13px;color:#fff;white-space:nowrap;letter-spacing:-0.266px;left:55.5px;">Label</span>
<svg class="a" style="left:121px;top:955px;overflow:hidden;" width="24" height="24" viewBox="0 0 24 24"><path d="M3 0 H13 L21 8 V24 H3 Z" fill="#ababab"/><path d="M13 0 L21 8 H13 Z" fill="#d4d1d1"/></svg>
<span class="a" style="top:986.4px;font-size:9.1px;line-height:13px;color:#fff;white-space:nowrap;letter-spacing:-0.378px;left:123.1px;">Page</span>
<svg class="a" style="left:188px;top:955px;overflow:hidden;" width="24" height="24" viewBox="0 0 24 24"><path d="M3 0 H13 L21 8 V24 H3 Z" fill="#ababab"/><path d="M13 0 L21 8 H13 Z" fill="#d4d1d1"/><rect x="13" y="16" width="5" height="5" fill="#333333"/></svg>
<span class="a" style="top:986.4px;font-size:9.1px;line-height:13px;color:#fff;white-space:nowrap;letter-spacing:-0.189px;left:171.9px;">Page Indicator</span>
<svg class="a" style="left:255px;top:955px;overflow:hidden;" width="24" height="24" viewBox="0 0 24 24"><rect x="0" y="0" width="24" height="24" fill="#ababab"/><rect x="3" y="3" width="18" height="18" fill="#d4d1d1"/></svg>
<span class="a" style="top:986.4px;font-size:9.1px;line-height:13px;color:#fff;white-space:nowrap;letter-spacing:-0.378px;left:257.1px;">Pane</span>
<svg class="a" style="left:322px;top:955px;overflow:hidden;" width="24" height="24" viewBox="0 0 24 24"><rect x="0" y="11" width="24" height="2" fill="#ababab"/><rect x="0" y="11" width="12" height="2" fill="#d4d1d1"/></svg>
<span class="a" style="top:986.4px;font-size:9.1px;line-height:13px;color:#fff;white-space:nowrap;letter-spacing:-0.354px;left:309.5px;">Progress Bar</span>
<svg class="a" style="left:54px;top:1007px;overflow:hidden;" width="24" height="24" viewBox="0 0 24 24"><circle cx="12" cy="12" r="8.5" stroke="#ababab" stroke-width="7" fill="none"/></svg>
<span class="a" style="top:1038.4px;font-size:9.1px;line-height:13px;color:#fff;white-space:nowrap;letter-spacing:-0.238px;left:41.0px;">Radio Button</span>
<svg class="a" style="left:121px;top:1007px;overflow:hidden;" width="24" height="24" viewBox="0 0 24 24"><circle cx="12" cy="12" r="8.5" stroke="#ababab" stroke-width="7" fill="none"/></svg>
<span class="a" style="top:1038.4px;font-size:9.1px;line-height:13px;color:#fff;white-space:nowrap;letter-spacing:-0.179px;left:102.8px;">Radio Delegate</span>
<svg class="a" style="left:188px;top:1007px;overflow:hidden;" width="24" height="24" viewBox="0 0 24 24"><rect x="0" y="11.2" width="24" height="1.6" fill="#ababab"/><circle cx="6.3" cy="12" r="2.9" stroke="#ababab" stroke-width="2" fill="#333333"/><circle cx="17.7" cy="12" r="2.9" stroke="#ababab" stroke-width="2" fill="#333333"/></svg>
<span class="a" style="top:1038.4px;font-size:9.1px;line-height:13px;color:#fff;white-space:nowrap;letter-spacing:-0.321px;left:175.6px;">Range Slider</span>
<svg class="a" style="left:255px;top:1007px;overflow:hidden;" width="24" height="24" viewBox="0 0 24 24"><circle cx="12" cy="12" r="12" fill="#ababab"/></svg>
<span class="a" style="top:1038.4px;font-size:9.1px;line-height:13px;color:#fff;white-space:nowrap;letter-spacing:-0.209px;left:240.3px;">Round Button</span>
<svg class="a" style="left:322px;top:1007px;overflow:hidden;" width="24" height="24" viewBox="0 0 24 24"><rect x="0" y="0" width="24" height="24" fill="#ababab"/><rect x="0.8" y="0.8" width="20.4" height="20.4" fill="#d4d1d1"/><rect x="22" y="2" width="1" height="17" fill="#d4d1d1"/><rect x="2" y="22" width="17" height="1" fill="#d4d1d1"/></svg>
<span class="a" style="top:1038.4px;font-size:9.1px;line-height:13px;color:#fff;white-space:nowrap;letter-spacing:-0.161px;left:312.4px;">Scroll View</span>
<svg class="a" style="left:54px;top:1059px;overflow:hidden;" width="24" height="24" viewBox="0 0 24 24"><rect x="0" y="11.2" width="24" height="1.6" fill="#ababab"/><circle cx="12" cy="12" r="2.9" stroke="#ababab" stroke-width="2" fill="#333333"/></svg>
<span class="a" style="top:1090.4px;font-size:9.1px;line-height:13px;color:#fff;white-space:nowrap;letter-spacing:-0.222px;left:55.0px;">Slider</span>
<svg class="a" style="left:121px;top:1059px;overflow:hidden;" width="24" height="24" viewBox="0 0 24 24"><rect x="0.5" y="6.5" width="23" height="11" stroke="#ababab" stroke-width="1" fill="none"/><path d="M6.5 6.5 V17.5 M17.5 6.5 V17.5" stroke="#ababab" stroke-width="1"/><rect x="3" y="9.5" width="1" height="5" fill="#ababab"/><rect x="20" y="9.5" width="1" height="5" fill="#ababab"/></svg>
<span class="a" style="top:1090.4px;font-size:9.1px;line-height:13px;color:#fff;white-space:nowrap;letter-spacing:-0.390px;left:116.3px;">Spin Box</span>
<svg class="a" style="left:188px;top:1059px;overflow:hidden;" width="24" height="24" viewBox="0 0 24 24"><path d="M7.5 5.5 V0.5 H16.5 V5.5 M3.5 11.5 V5.5 H20.5 V11.5 M0.5 11.5 H23.5 V23.5 H0.5 Z" stroke="#ababab" stroke-width="1" fill="none"/></svg>
<span class="a" style="top:1090.4px;font-size:9.1px;line-height:13px;color:#fff;white-space:nowrap;letter-spacing:-0.197px;left:178.5px;">Stack View</span>
<svg class="a" style="left:255px;top:1059px;overflow:hidden;" width="24" height="24" viewBox="0 0 24 24"><rect x="2.5" y="0.5" width="19" height="5" stroke="#ababab" stroke-width="1" fill="none"/><rect x="2.5" y="6.5" width="19" height="5" stroke="#ababab" stroke-width="1" fill="none"/><rect x="2.5" y="12.5" width="19" height="5" stroke="#ababab" stroke-width="1" fill="none"/><rect x="2.5" y="18.5" width="19" height="5" stroke="#ababab" stroke-width="1" fill="none"/></svg>
<span class="a" style="top:1090.4px;font-size:9.1px;line-height:13px;color:#fff;white-space:nowrap;letter-spacing:-0.144px;left:236.1px;">Swipe Delegate</span>
<svg class="a" style="left:322px;top:1059px;overflow:hidden;" width="24" height="24" viewBox="0 0 24 24"><rect x="0.5" y="0.5" width="12" height="23" stroke="#ababab" stroke-width="1" fill="none"/><path d="M12.5 3.5 H19.5 V20.5 H12.5 M19.5 6.5 H23.5 V17.5 H19.5" stroke="#ababab" stroke-width="1" fill="none"/></svg>
<span class="a" style="top:1090.4px;font-size:9.1px;line-height:13px;color:#fff;white-space:nowrap;letter-spacing:-0.110px;left:311.1px;">Swipe View</span>
<svg class="a" style="left:54px;top:1111px;overflow:hidden;" width="24" height="9" viewBox="0 0 24 9"><rect x="0" y="6" width="24" height="12" rx="6" fill="#ababab"/></svg>
<svg class="a" style="left:121px;top:1111px;overflow:hidden;" width="24" height="9" viewBox="0 0 24 9"><rect x="0" y="6" width="24" height="12" rx="6" fill="#ababab"/></svg>
<svg class="a" style="left:188px;top:1111px;overflow:hidden;" width="24" height="9" viewBox="0 0 24 9"><rect x="0" y="6" width="24" height="12" fill="#ababab"/></svg>
<svg class="a" style="left:255px;top:1111px;overflow:hidden;" width="24" height="9" viewBox="0 0 24 9"><rect x="0" y="6" width="24" height="12" fill="#ababab"/></svg>
<svg class="a" style="left:322px;top:1111px;overflow:hidden;" width="24" height="9" viewBox="0 0 24 9"><rect x="0" y="0" width="24" height="24" fill="#ababab"/><rect x="4" y="4" width="16" height="16" fill="#333333"/><rect x="4" y="6" width="16" height="1.2" fill="#ababab"/><rect x="4" y="9.5" width="16" height="1.2" fill="#ababab"/></svg>
<div class="a" style="left:385px;top:69px;width:304px;height:24px;background:#1f1f1f;"></div>
<svg class="a" style="left:391px;top:74px;" width="14" height="13" viewBox="0 0 14 13"><g transform="translate(0.5,0.5)"><path d="M0.7 6 H12.5 M6 0.7 L0.7 6 L6 11.3" stroke="#c4c4c4" stroke-width="1" fill="none"/></g></svg>
<svg class="a" style="left:415px;top:74px;" width="14" height="13" viewBox="0 0 14 13"><g transform="translate(0.5,0.5)"><path d="M12.3 6 H0.5 M7 0.7 L12.3 6 L7 11.3" stroke="#c4c4c4" stroke-width="1" fill="none"/></g></svg>
<svg class="a" style="left:439px;top:74px;" width="13" height="14" viewBox="0 0 13 14"><g transform="translate(0.5,0.5)"><path d="M6 0.5 V12.3 M0.7 7 L6 12.3 L11.3 7" stroke="#c4c4c4" stroke-width="1" fill="none"/></g></svg>
<svg class="a" style="left:463px;top:74px;" width="13" height="14" viewBox="0 0 13 14"><g transform="translate(0.5,0.5)"><path d="M6 12.5 V0.7 M0.7 6 L6 0.7 L11.3 6" stroke="#c4c4c4" stroke-width="1" fill="none"/></g></svg>
<svg class="a" style="left:488px;top:76px;" width="14" height="11" viewBox="0 0 14 11"><path d="M0 0 H10.5 V1 L6.3 5.2 V10.5 H4.2 V5.2 L0 1 Z" fill="#c4c4c4"/><path d="M9 8 H13 L11 10.2 Z" fill="#c4c4c4"/></svg>
<div class="a" style="left:385px;top:95px;width:304px;height:20px;background:#262626;"></div>
<svg class="a" style="left:388px;top:97px;" width="16" height="16" viewBox="0 0 16 16"><rect x="0" y="2" width="16" height="12" rx="3.5" fill="#a9a9a9"/></svg>
<span class="a" style="top:97.3px;font-size:12px;line-height:17px;color:#fff;white-space:nowrap;letter-spacing:-0.226px;left:408.3px;">Rectangle</span>
<div class="a" style="left:405px;top:119px;width:284px;height:20px;background:#262626;"></div>
<svg class="a" style="left:408px;top:121px;" width="16" height="16" viewBox="0 0 16 16"><path d="M0 0 H16 V5 H14.2 L13.4 2.6 H10 V13.2 L12.6 14 V16 H3.4 V14 L6 13.2 V2.6 H2.6 L1.8 5 H0 Z" fill="#a9a9a9"/></svg>
<span class="a" style="top:121.3px;font-size:12px;line-height:17px;color:#fff;white-space:nowrap;letter-spacing:-0.352px;left:428.3px;">Text</span>
<div class="a" style="left:405px;top:143px;width:284px;height:20px;background:#1c1c1c;"></div>
<svg class="a" style="left:408px;top:145px;" width="16" height="16" viewBox="0 0 16 16"><path d="M0 2.5 L16 0 V3 L0 5.5 Z" fill="#a9a9a9"/><rect x="0" y="6.7" width="16" height="9.3" fill="#a9a9a9"/></svg>
<span class="a" style="top:145.3px;font-size:12px;line-height:17px;color:#2aafd3;white-space:nowrap;letter-spacing:-0.358px;left:428.3px;">view3D</span>
<div class="a" style="left:425px;top:167px;width:264px;height:20px;background:#262626;"></div>
<svg class="a" style="left:428px;top:169px;" width="16" height="16" viewBox="0 0 16 16"><rect x="0" y="0" width="16" height="16" fill="#a9a9a9"/><path d="M9 15.3 V9 H15.3 Z" fill="#262626"/></svg>
<span class="a" style="top:169.3px;font-size:12px;line-height:17px;color:#fff;white-space:nowrap;letter-spacing:-0.087px;left:448.3px;">sceneEnvironment</span>
<div class="a" style="left:425px;top:191px;width:264px;height:20px;background:#262626;"></div>
<svg class="a" style="left:428px;top:193px;" width="16" height="16" viewBox="0 0 16 16"><path d="M0 3 L7 6.2 V16 L0 12.8 Z" fill="#a9a9a9"/><path d="M4.8 1.4 L6 0.8 L11.5 3.6 V13.2 L8.6 12 V5.2 Z" fill="#a9a9a9"/><path d="M9 0.4 L10.2 0 L16 2.8 V12.6 L13 11.4 V3.6 Z" fill="#a9a9a9"/></svg>
<span class="a" style="top:193.3px;font-size:12px;line-height:17px;color:#fff;white-space:nowrap;letter-spacing:-0.404px;left:448.3px;">scene</span>
<div class="a" style="left:445px;top:215px;width:244px;height:20px;background:#262626;"></div>
<svg class="a" style="left:448px;top:217px;" width="16" height="16" viewBox="0 0 16 16"><circle cx="8" cy="8" r="3.1" fill="#a9a9a9"/><path d="M12.40 8.00 L16.00 8.00" stroke="#a9a9a9" stroke-width="1.5"/><path d="M11.11 11.11 L13.66 13.66" stroke="#a9a9a9" stroke-width="1.5"/><path d="M8.00 12.40 L8.00 16.00" stroke="#a9a9a9" stroke-width="1.5"/><path d="M4.89 11.11 L2.34 13.66" stroke="#a9a9a9" stroke-width="1.5"/><path d="M3.60 8.00 L0.00 8.00" stroke="#a9a9a9" stroke-width="1.5"/><path d="M4.89 4.89 L2.34 2.34" stroke="#a9a9a9" stroke-width="1.5"/><path d="M8.00 3.60 L8.00 0.00" stroke="#a9a9a9" stroke-width="1.5"/><path d="M11.11 4.89 L13.66 2.34" stroke="#a9a9a9" stroke-width="1.5"/></svg>
<span class="a" style="top:217.3px;font-size:12px;line-height:17px;color:#fff;white-space:nowrap;letter-spacing:0.105px;left:468.3px;">directionalLight</span>
<div class="a" style="left:445px;top:239px;width:244px;height:20px;background:#262626;"></div>
<svg class="a" style="left:448px;top:241px;" width="16" height="16" viewBox="0 0 16 16"><rect x="0" y="2" width="10" height="12" rx="1.5" fill="#a9a9a9"/><path d="M10 8 L16 2.5 V13.5 Z" fill="#a9a9a9"/></svg>
<span class="a" style="top:241.3px;font-size:12px;line-height:17px;color:#fff;white-space:nowrap;letter-spacing:-0.286px;left:468.3px;">camera</span>
<div class="a" style="left:445px;top:263px;width:244px;height:20px;background:#262626;"></div>
<svg class="a" style="left:448px;top:265px;" width="16" height="16" viewBox="0 0 16 16"><path d="M8 0.8 L13 3.7 V10.3 L8 13.2 L3 10.3 V3.7 Z" fill="#a9a9a9"/><path d="M4.2 4.4 L8 6.6 L11.8 4.4" stroke="#262626" stroke-width="1" fill="none"/></svg>
<span class="a" style="top:265.3px;font-size:12px;line-height:17px;color:#fff;white-space:nowrap;letter-spacing:0.066px;left:468.3px;">cubeModel</span>
<div class="a" style="left:465px;top:287px;width:224px;height:20px;background:#262626;"></div>
<svg class="a" style="left:468px;top:289px;" width="16" height="16" viewBox="0 0 16 16"><circle cx="8" cy="8" r="8" fill="#a9a9a9"/><circle cx="6" cy="5.5" r="2.1" fill="#262626"/></svg>
<span class="a" style="top:289.3px;font-size:12px;line-height:17px;color:#fff;white-space:nowrap;letter-spacing:-0.033px;left:488.3px;">cubeMaterial</span>
<div class="a" style="left:465px;top:311px;width:224px;height:20px;background:#262626;"></div>
<svg class="a" style="left:468px;top:313px;" width="16" height="16" viewBox="0 0 16 16"><path d="M0 3 L7 6.2 V16 L0 12.8 Z" fill="#a9a9a9"/><path d="M4.8 1.4 L6 0.8 L11.5 3.6 V13.2 L8.6 12 V5.2 Z" fill="#a9a9a9"/><path d="M9 0.4 L10.2 0 L16 2.8 V12.6 L13 11.4 V3.6 Z" fill="#a9a9a9"/></svg>
<span class="a" style="top:313.3px;font-size:12px;line-height:17px;color:#fff;white-space:nowrap;letter-spacing:0.122px;left:488.3px;">group</span>
<div class="a" style="left:485px;top:335px;width:204px;height:20px;background:#262626;"></div>
<svg class="a" style="left:488px;top:337px;" width="16" height="16" viewBox="0 0 16 16"><rect x="0" y="2" width="16" height="12" rx="3.5" fill="#a9a9a9"/></svg>
<span class="a" style="top:337.3px;font-size:12px;line-height:17px;color:#fff;white-space:nowrap;letter-spacing:-0.085px;left:508.3px;">rectangle</span>
<div class="a" style="left:505px;top:359px;width:184px;height:20px;background:#262626;"></div>
<svg class="a" style="left:508px;top:361px;" width="16" height="16" viewBox="0 0 16 16"><path d="M0 0 H16 V5 H14.2 L13.4 2.6 H10 V13.2 L12.6 14 V16 H3.4 V14 L6 13.2 V2.6 H2.6 L1.8 5 H0 Z" fill="#a9a9a9"/></svg>
<span class="a" style="top:361.3px;font-size:12px;line-height:17px;color:#fff;white-space:nowrap;letter-spacing:-0.163px;left:528.3px;">text1</span>
<div class="a" style="left:395px;top:117px;width:1px;height:33px;background:#7e7e7e;"></div>
<div class="a" style="left:395px;top:129px;width:10px;height:1px;background:#7e7e7e;"></div>
<svg class="a" style="left:390px;top:151px;" width="11" height="6" viewBox="0 0 11 6"><g transform="translate(0.5,0.0)"><path d="M0.3 0 H9.7 L5 5 Z" fill="#7e7e7e"/></g></svg>
<div class="a" style="left:401.5px;top:153.0px;width:4.0px;height:1px;background:#7e7e7e;"></div>
<div class="a" style="left:415px;top:164px;width:1px;height:34px;background:#7e7e7e;"></div>
<div class="a" style="left:415px;top:177px;width:10px;height:1px;background:#7e7e7e;"></div>
<svg class="a" style="left:410px;top:199px;" width="11" height="6" viewBox="0 0 11 6"><g transform="translate(0.5,0.0)"><path d="M0.3 0 H9.7 L5 5 Z" fill="#7e7e7e"/></g></svg>
<div class="a" style="left:421.5px;top:201.0px;width:4.0px;height:1px;background:#7e7e7e;"></div>
<div class="a" style="left:435px;top:213px;width:1px;height:57px;background:#7e7e7e;"></div>
<div class="a" style="left:435px;top:225px;width:10px;height:1px;background:#7e7e7e;"></div>
<div class="a" style="left:435px;top:249px;width:10px;height:1px;background:#7e7e7e;"></div>
<svg class="a" style="left:430px;top:271px;" width="11" height="6" viewBox="0 0 11 6"><g transform="translate(0.5,0.0)"><path d="M0.3 0 H9.7 L5 5 Z" fill="#7e7e7e"/></g></svg>
<div class="a" style="left:441.5px;top:273.0px;width:4.0px;height:1px;background:#7e7e7e;"></div>
<div class="a" style="left:455px;top:285px;width:1px;height:33px;background:#7e7e7e;"></div>
<div class="a" style="left:455px;top:297px;width:10px;height:1px;background:#7e7e7e;"></div>
<svg class="a" style="left:450px;top:319px;" width="11" height="6" viewBox="0 0 11 6"><g transform="translate(0.5,0.0)"><path d="M0.3 0 H9.7 L5 5 Z" fill="#7e7e7e"/></g></svg>
<div class="a" style="left:461.5px;top:321.0px;width:4.0px;height:1px;background:#7e7e7e;"></div>
<div class="a" style="left:475px;top:333px;width:1px;height:8px;background:#7e7e7e;"></div>
<svg class="a" style="left:470px;top:343px;" width="11" height="6" viewBox="0 0 11 6"><g transform="translate(0.5,0.0)"><path d="M0.3 0 H9.7 L5 5 Z" fill="#7e7e7e"/></g></svg>
<div class="a" style="left:481.5px;top:345.0px;width:4.0px;height:1px;background:#7e7e7e;"></div>
<div class="a" style="left:495px;top:357px;width:1px;height:12px;background:#7e7e7e;"></div>
<div class="a" style="left:495px;top:369px;width:10px;height:1px;background:#7e7e7e;"></div>
<svg class="a" style="left:36px;top:30px;" width="9" height="14" viewBox="0 0 9 14"><path d="M7.5 1 L1.5 7 L7.5 13" stroke="#e6b422" stroke-width="1.6" fill="none"/></svg>
<svg class="a" style="left:59px;top:30px;" width="9" height="14" viewBox="0 0 9 14"><path d="M1.5 1 L7.5 7 L1.5 13" stroke="#6a6a6a" stroke-width="1.6" fill="none"/></svg>
<svg class="a" style="left:83px;top:29px;" width="13" height="14" viewBox="0 0 13 14"><rect x="0" y="6.5" width="8" height="7" fill="#5e5e5e"/><path d="M6 6.5 V3.5 A2.7 2.7 0 0 1 11.4 3.5 V6" stroke="#5e5e5e" stroke-width="1.5" fill="none"/></svg>
<svg class="a" style="left:105px;top:28px;" width="16" height="17" viewBox="0 0 16 17"><g transform="translate(0.5,0)"><path d="M0.5 0.5 H9.5 L14.5 5.5 V15.5 H0.5 Z" fill="#f4f4f4" stroke="#bdbdbd" stroke-width="0.6"/><path d="M9.5 0.5 V5.5 H14.5 Z" fill="#cfcfcf"/><text x="1.3" y="13.3" font-family="Liberation Sans, sans-serif" font-size="7" font-weight="bold" fill="#1f8fb0" letter-spacing="-0.3">qml</text></g></svg>
<span class="a" style="top:29.3px;font-size:12px;line-height:17px;color:#e6e6e6;white-space:nowrap;letter-spacing:-0.143px;left:129.1px;">Screen01.ui.qml*</span>
<svg class="a" style="left:314px;top:31px;" width="9" height="11" viewBox="0 0 9 11"><g transform="translate(0.5,0.5)"><path d="M0 4 L4 0 L8 4 Z M0 6 L4 10 L8 6 Z" fill="#c8c8c8"/></g></svg>
<div class="a" style="left:328px;top:28px;width:1px;height:16px;background:#5a5a5a;"></div>
<svg class="a" style="left:335px;top:32px;" width="10" height="10" viewBox="0 0 10 10"><path d="M0.5 0.5 L9.5 9.5 M9.5 0.5 L0.5 9.5" stroke="#c8c8c8" stroke-width="1.3"/></svg>
<div class="a" style="left:352px;top:28px;width:1px;height:16px;background:#5a5a5a;"></div>
<svg class="a" style="left:561px;top:29px;" width="15" height="15" viewBox="0 0 15 15"><g transform="translate(0,0.5)"><circle cx="7" cy="7" r="6.2" stroke="#c8c8c8" stroke-width="1.2" fill="none"/><circle cx="7" cy="7" r="4.3" stroke="#c8c8c8" stroke-width="0.8" fill="none"/><path d="M5.5 4.3 L10 7 L5.5 9.7 Z" fill="#c8c8c8"/></g></svg>
<span class="a" style="top:29.3px;font-size:12px;line-height:17px;color:#e6e6e6;white-space:nowrap;letter-spacing:-0.745px;left:585.7px;">100 %</span>
<svg class="a" style="left:647px;top:31px;" width="9" height="11" viewBox="0 0 9 11"><g transform="translate(0.5,0.5)"><path d="M0 4 L4 0 L8 4 Z M0 6 L4 10 L8 6 Z" fill="#c8c8c8"/></g></svg>
<span class="a" style="top:29.3px;font-size:12px;line-height:17px;color:#5c5c5c;white-space:nowrap;letter-spacing:-0.089px;left:672.6px;">Default</span>
<svg class="a" style="left:735px;top:31px;" width="9" height="11" viewBox="0 0 9 11"><g transform="translate(0.5,0.5)"><path d="M0 4 L4 0 L8 4 Z M0 6 L4 10 L8 6 Z" fill="#5a5a5a"/></g></svg>
<div class="a" style="left:749px;top:28px;width:1px;height:16px;background:#5a5a5a;"></div>
<div class="a" style="left:752px;top:28px;width:1px;height:16px;background:#5a5a5a;"></div>
<svg class="a" style="left:755px;top:24px;" width="150" height="24" viewBox="755 24 150 24"><path d="M767.5 30.800 V39.500 M761.800 36.500 H770" stroke="#c8c8c8" stroke-width="1.100"/><path d="M765 33.200 L767.500 30.500 L770 33.200 M764.400 34 L761.600 36.500 L764.400 39" stroke="#c8c8c8" stroke-width="1.100" fill="none"/><path d="M771.500 34.200 L773.500 36.500 M767.500 40 L765.500 41.800" stroke="#5a5a5a" stroke-width="1"/><circle cx="770.7" cy="39.4" r="3.6" fill="#e6727a"/><path d="M768.8000000000001 38.8 H772.4000000000001 V41.1 H769.1" stroke="#2a2020" stroke-width="0.9" fill="none"/><path d="M770.3000000000001 37.1 L768.5 38.8 L770.3000000000001 40.5" stroke="#2a2020" stroke-width="0.9" fill="none"/><rect x="784.600" y="30.600" width="12.800" height="11" stroke="#c8c8c8" stroke-width="1.200" fill="none"/><path d="M787.500 36 V33.500 H790.500 M792.500 33.500 H795 V36 M787.500 37.500 V39.800 H790" stroke="#c8c8c8" stroke-width="1.100" fill="none"/><circle cx="794.6" cy="39.5" r="3.6" fill="#e6727a"/><path d="M792.7 38.9 H796.3000000000001 V41.2 H793.0" stroke="#2a2020" stroke-width="0.9" fill="none"/><path d="M794.2 37.2 L792.4 38.9 L794.2 40.6" stroke="#2a2020" stroke-width="0.9" fill="none"/><rect x="813.700" y="28.900" width="8.800" height="9.600" stroke="#9c9c9c" stroke-width="1.300" fill="none"/><rect x="819.700" y="32.900" width="8.700" height="10.200" stroke="#a8a8a8" stroke-width="1.300" fill="#1f1f1f"/><path transform="translate(824.100,38.300) scale(1.25)" d="M0 -2 L0.6 -0.6 L2 -0.6 L0.9 0.3 L1.3 1.8 L0 0.9 L-1.3 1.8 L-0.9 0.3 L-2 -0.6 L-0.6 -0.6 Z" fill="#c8c8c8"/><rect x="837.700" y="28.900" width="8.800" height="9.600" stroke="#8c8c8c" stroke-width="1.300" fill="none"/><rect x="842.700" y="32" width="10.300" height="11.700" fill="#b2b2b2"/><path transform="translate(847.900,38.200) scale(1.25)" d="M0 -2 L0.6 -0.6 L2 -0.6 L0.9 0.3 L1.3 1.8 L0 0.9 L-1.3 1.8 L-0.9 0.3 L-2 -0.6 L-0.6 -0.6 Z" fill="#1f1f1f"/><rect x="864.300" y="32.200" width="8.400" height="8.600" rx="1" stroke="#8c8c8c" stroke-width="1.100" fill="#343434"/><path d="M861.500 31.200 V41.800 M875.500 31.200 V41.800 M864 29.300 H873 M864 43.200 H873" stroke="#c8c8c8" stroke-width="1.100"/><rect x="888.300" y="32.200" width="8.400" height="8.600" rx="1" stroke="#4c4c4c" stroke-width="1.100" fill="#2a2a2a"/><path d="M885.500 31.200 V41.800 M899.500 31.200 V36 M888 29.300 H897 M888 43.200 H893" stroke="#4c4c4c" stroke-width="1.100"/><circle cx="896.500" cy="40" r="3.400" fill="#1f1f1f" stroke="#5a5a5a" stroke-width="1"/><path d="M894.800 39.500 H898 V41.500 H895.200" stroke="#5a5a5a" stroke-width="0.800" fill="none"/></svg>
<div class="a" style="left:806px;top:28px;width:1px;height:16px;background:#5a5a5a;"></div>
<div class="a" style="left:908px;top:28px;width:1px;height:16px;background:#5a5a5a;"></div>
<svg class="a" style="left:917px;top:32px;" width="13" height="8" viewBox="0 0 13 8"><rect x="0.5" y="0.5" width="2.4" height="7" stroke="#404040" stroke-width="1" fill="none"/><rect x="3.7" y="0.5" width="2.4" height="7" stroke="#404040" stroke-width="1" fill="none"/><rect x="6.9" y="0.5" width="2.4" height="7" stroke="#404040" stroke-width="1" fill="none"/><rect x="10.1" y="0.5" width="2.4" height="7" stroke="#404040" stroke-width="1" fill="none"/></svg>
<svg class="a" style="left:943px;top:29px;" width="8" height="15" viewBox="0 0 8 15"><rect x="0.5" y="0.5" width="7" height="3.6" stroke="#404040" stroke-width="1" fill="none"/><rect x="0.5" y="5.5" width="7" height="3.6" stroke="#404040" stroke-width="1" fill="none"/><rect x="0.5" y="10.5" width="7" height="3.6" stroke="#404040" stroke-width="1" fill="none"/></svg>
<svg class="a" style="left:965px;top:30px;" width="13" height="13" viewBox="0 0 13 13"><rect x="0.5" y="0.5" width="5" height="5" stroke="#404040" stroke-width="1" fill="none"/><rect x="0.5" y="7.5" width="5" height="5" stroke="#404040" stroke-width="1" fill="none"/><rect x="7.5" y="0.5" width="5" height="5" stroke="#404040" stroke-width="1" fill="none"/><rect x="7.5" y="7.5" width="5" height="5" stroke="#404040" stroke-width="1" fill="none"/></svg>
<div class="a" style="left:986px;top:28px;width:1px;height:16px;background:#5a5a5a;"></div>
<svg class="a" style="left:993px;top:28px;" width="17" height="17" viewBox="0 0 17 17"><g transform="translate(0,0.5)"><rect x="0.7" y="1.2" width="12.6" height="12.6" rx="3.3" stroke="#c8c8c8" stroke-width="1.1" fill="none"/><path d="M4.500 10.500 L13.500 1" stroke="#1f1f1f" stroke-width="3.4"/><path d="M4.500 10.500 L13.500 1" stroke="#c8c8c8" stroke-width="1.500"/></g></svg>
<svg class="a" style="left:1017px;top:28px;" width="17" height="17" viewBox="0 0 17 17"><g transform="translate(0,0.5)"><path d="M13.300 6 V11 A3.3 3.3 0 0 1 10 14.300 H4 A3.3 3.3 0 0 1 0.7 11 V6.500 A3.3 3.3 0 0 1 4 3.200 H12.500" stroke="#c8c8c8" stroke-width="1.1" fill="none"/><path d="M10.300 0.600 L13.300 3.200 L10.300 5.800" stroke="#c8c8c8" stroke-width="1.2" fill="none"/></g></svg>
<div class="a" style="left:1039px;top:27px;width:69px;height:18px;background:#292929;"></div>
<span class="a" style="top:29.3px;font-size:12px;line-height:17px;color:#e6e6e6;white-space:nowrap;letter-spacing:-0.089px;left:1041.4px;">Default</span>
<svg class="a" style="left:1115px;top:34px;" width="9" height="6" viewBox="0 0 9 6"><g transform="translate(0.5,0)"><path d="M0 0 H8 L4 4.5 Z" fill="#c8c8c8"/></g></svg>
<div class="a" style="left:1128px;top:28px;width:1px;height:16px;background:#5a5a5a;"></div>
<svg class="a" style="left:1237px;top:31px;" width="9" height="11" viewBox="0 0 9 11"><g transform="translate(0.5,0.5)"><path d="M0 4 L4 0 L8 4 Z M0 6 L4 10 L8 6 Z" fill="#5a5a5a"/></g></svg>
<div class="a" style="left:1250px;top:28px;width:1px;height:16px;background:#5a5a5a;"></div>
<span class="a" style="top:29.0px;font-size:12px;line-height:17px;color:#e6e6e6;white-space:nowrap;letter-spacing:-0.528px;left:1767.3px;">3D Preset</span>
<svg class="a" style="left:1868px;top:31px;" width="9" height="11" viewBox="0 0 9 11"><g transform="translate(0.5,0.5)"><path d="M0 4 L4 0 L8 4 Z M0 6 L4 10 L8 6 Z" fill="#c8c8c8"/></g></svg>
<div class="a" style="left:1881px;top:28px;width:1px;height:16px;background:#5a5a5a;"></div>
<svg class="a" style="left:1886px;top:30px;" width="16" height="13" viewBox="0 0 16 13"><path d="M0 0 H16 V9 H5 L1.5 12.5 V9 H0 Z" fill="#8f8f8f"/></svg>
<div class="a" style="left:739px;top:69px;width:24px;height:24px;background:#121212;"></div>
<svg class="a" style="left:695px;top:75px;" width="15" height="14" viewBox="0 0 15 14"><g transform="translate(0.5,0)"><path d="M0.5 12.5 V0.5 H8" stroke="#b4b4b4" stroke-width="1" fill="none"/><path d="M9 3.5 L11.3 1 L13.6 3.5 Z" fill="#b4b4b4"/><path d="M5.2 8 V12.4 L2.8 10.2 Z" fill="#b4b4b4"/><path d="M7.5 6.5 L13 12.3 M13 6.5 L7.5 12.3" stroke="#b4b4b4" stroke-width="1"/></g></svg>
<svg class="a" style="left:720px;top:75px;" width="14" height="13" viewBox="0 0 14 13"><path d="M0.5 12.5 V0.5 H8" stroke="#b4b4b4" stroke-width="1" fill="none"/><path d="M9 3.5 L11.3 1 L13.6 3.5 Z" fill="#b4b4b4"/><path d="M5.2 8 V12.4 L2.8 10.2 Z" fill="#b4b4b4"/><path d="M8.2 12.6 V7.6 Q8.2 6.3 9.5 6.3 H11 Q12.3 6.3 12.3 7.6 V12.6 M8.2 9.8 H12.3" stroke="#d8d8d8" stroke-width="1.3" fill="none"/></svg>
<svg class="a" style="left:744px;top:75px;" width="15" height="14" viewBox="0 0 15 14"><g transform="translate(0.5,0)"><path d="M0.5 12.5 V0.5 H8" stroke="#b4b4b4" stroke-width="1" fill="none"/><path d="M9 3.5 L11.3 1 L13.6 3.5 Z" fill="#b4b4b4"/><path d="M5.2 8 V12.4 L2.8 10.2 Z" fill="#b4b4b4"/><rect x="7.4" y="6.4" width="6" height="6.2" fill="#a0a0a0"/></g></svg>
<div class="a" style="left:766px;top:73px;width:1px;height:16px;background:#5a5a5a;"></div>
<svg class="a" style="left:774px;top:76px;" width="13" height="12" viewBox="0 0 13 12"><rect x="0.5" y="0.5" width="12" height="11" stroke="#b4b4b4" stroke-width="1" stroke-dasharray="1 1" fill="none"/><rect x="2.6" y="2.6" width="7.8" height="6.8" stroke="#e0e0e0" stroke-width="1.2" fill="none"/></svg>
<div class="a" style="left:796px;top:73px;width:1px;height:16px;background:#5a5a5a;"></div>
<div class="a" style="left:800px;top:71px;width:98px;height:20px;background:#303030;"></div>
<span class="a" style="top:75.7px;font-size:10px;line-height:14px;color:#fff;white-space:nowrap;letter-spacing:-0.563px;left:802px;">Override Width</span>
<div class="a" style="left:900px;top:71px;width:98px;height:20px;background:#303030;"></div>
<span class="a" style="top:75.7px;font-size:10px;line-height:14px;color:#fff;white-space:nowrap;letter-spacing:-0.535px;left:902px;">Override Height</span>
<svg class="a" style="left:1268px;top:75px;" width="12" height="12" viewBox="0 0 12 12"><rect width="12" height="12" fill="#000"/><rect x="2" y="2" width="4" height="4" fill="#fff"/><rect x="6" y="6" width="4" height="4" fill="#fff"/></svg>
<svg class="a" style="left:1288px;top:76px;" width="9" height="11" viewBox="0 0 9 11"><g transform="translate(0.5,0)"><path d="M0 4 L4 0 L8 4 Z M0 6 L4 10 L8 6 Z" fill="#c8c8c8"/></g></svg>
<svg class="a" style="left:1305px;top:72px;" width="19" height="19" viewBox="0 0 19 19"><g transform="translate(0.5,0)"><circle cx="10" cy="7.3" r="5.6" stroke="#a6a6a6" stroke-width="1.1" fill="none"/><path d="M6 11.4 L1 16.6" stroke="#a6a6a6" stroke-width="1.3"/><path d="M7.2 7.3 H12.8 M10 4.5 V10.1" stroke="#e0e0e0" stroke-width="1.2"/></g></svg>
<svg class="a" style="left:1329px;top:72px;" width="19" height="19" viewBox="0 0 19 19"><g transform="translate(0.7,0)"><circle cx="10" cy="7.3" r="5.6" stroke="#a6a6a6" stroke-width="1.1" fill="none"/><path d="M6 11.4 L1 16.6" stroke="#a6a6a6" stroke-width="1.3"/><path d="M7.2 7.3 H12.8" stroke="#c0c0c0" stroke-width="1.2"/></g></svg>
<span class="a" style="top:74.2px;font-size:12px;line-height:17px;color:#e6e6e6;white-space:nowrap;letter-spacing:-0.705px;left:1355.7px;">100 %</span>
<svg class="a" style="left:1417px;top:76px;" width="9" height="11" viewBox="0 0 9 11"><g transform="translate(0.5,0)"><path d="M0 4 L4 0 L8 4 Z M0 6 L4 10 L8 6 Z" fill="#c8c8c8"/></g></svg>
<svg class="a" style="left:1434px;top:72px;" width="19" height="19" viewBox="0 0 19 19"><g transform="translate(0.7,0)"><circle cx="10" cy="7.3" r="5.6" stroke="#a6a6a6" stroke-width="1.1" fill="none"/><path d="M6 11.4 L1 16.6" stroke="#a6a6a6" stroke-width="1.3"/><path d="M7.6 4.9 L12.4 9.7 M12.4 4.9 L7.6 9.7" stroke="#c0c0c0" stroke-width="1.1"/><path d="M7.2 6.4 V4.5 H9 M11 4.5 H12.8 V6.4 M7.2 8.2 V10.1 H9 M11 10.1 H12.8 V8.2" stroke="#c0c0c0" stroke-width="0.9" fill="none"/></g></svg>
<svg class="a" style="left:1458px;top:72px;" width="19" height="19" viewBox="0 0 19 19"><g transform="translate(0.7,0)"><circle cx="10" cy="7.3" r="5.6" stroke="#a6a6a6" stroke-width="1.1" fill="none"/><path d="M6 11.4 L1 16.6" stroke="#a6a6a6" stroke-width="1.3"/><path d="M7.2 6.4 V4.5 H9 M11 4.5 H12.8 V6.4 M7.2 8.2 V10.1 H9 M11 10.1 H12.8 V8.2" stroke="#c0c0c0" stroke-width="1.1" fill="none"/></g></svg>
<svg class="a" style="left:1485px;top:74px;" width="13" height="14" viewBox="0 0 13 14"><g transform="translate(0.5,0.0)"><path d="M2.2 4.6 A4.6 4.6 0 1 1 2.6 10.2" stroke="#c4c4c4" stroke-width="1.2" fill="none"/><path d="M1.2 1.2 V5.4 H5.4 Z" fill="#c4c4c4"/></g></svg>
<svg class="a" style="left:690px;top:93px;overflow:hidden;" width="804" height="482" viewBox="690 93 804 482"><polygon points="1072.3,138.5 1164.6,187.5 1095.6,319.2 1072.3,322.2 1029.7,245" fill="#ffffff"/><text x="1051.9" y="339" font-family="Liberation Sans, sans-serif" font-size="11.4" fill="#000000" textLength="82.1" lengthAdjust="spacingAndGlyphs">Hello untitled28</text><text transform="matrix(0.572,0.249,-0.255,1.23,1068.6,154.4)" font-family="Liberation Sans, sans-serif" font-size="12" fill="#1a1a1a">Text</text><polygon points="960.2,218.1 1032.9,230.6 1029.7,245 1060.9,249.5 1096.3,271.2 1026.3,265.9" fill="#2a9628"/><polygon points="960.2,218.1 1026.3,265.9 985.7,368.2 931,306.9" fill="#3fc83d" stroke="#3fc83d" stroke-width="0.6"/><polygon points="1026.3,265.9 1096.3,271.2 1056.4,352.9 985.7,368.2" fill="#3abe38"/><path d="M811 93 V489.6 H1211 V93" stroke="#d4199c" stroke-width="1.6" fill="none"/><rect x="808.5" y="287.2" width="5" height="5" fill="#ffffff" stroke="#d4199c" stroke-width="1"/><rect x="1208.5" y="287.2" width="5" height="5" fill="#ffffff" stroke="#d4199c" stroke-width="1"/><rect x="808.5" y="487.2" width="5" height="5" fill="#ffffff" stroke="#d4199c" stroke-width="1"/><rect x="1008.5" y="487.2" width="5" height="5" fill="#ffffff" stroke="#d4199c" stroke-width="1"/><rect x="1208.5" y="487.2" width="5" height="5" fill="#ffffff" stroke="#d4199c" stroke-width="1"/></svg>
<div class="a" style="left:1494px;top:93px;width:10px;height:482px;background:#404040;"></div>
<div class="a" style="left:1494px;top:335px;width:10px;height:31px;background:#505050;"></div>
<div class="a" style="left:690px;top:575px;width:814px;height:10px;background:#404040;"></div>
<div class="a" style="left:1111px;top:575px;width:64px;height:10px;background:#505050;"></div>
<div class="a" style="left:1494px;top:575px;width:10px;height:10px;background:#3a3a3a;"></div>
<div class="a" style="left:721px;top:605px;width:24px;height:24px;background:#121212;"></div>
<div class="a" style="left:829px;top:605px;width:24px;height:24px;background:#121212;"></div>
<div class="a" style="left:901px;top:605px;width:24px;height:24px;background:#121212;"></div>
<svg class="a" style="left:697px;top:610px;" width="12" height="14" viewBox="0 0 12 14"><path d="M1 0.8 L10.5 8 L5.6 8.6 L3 13 Z" stroke="#a8a8a8" stroke-width="1" fill="none"/></svg>
<div class="a" style="left:718px;top:609px;width:1px;height:16px;background:#5a5a5a;"></div>
<svg class="a" style="left:726px;top:610px;" width="14" height="14" viewBox="0 0 14 14"><g transform="translate(0.5,0.5)"><path d="M6.5 1 V12 M1 6.5 H12" stroke="#1a9fdb" stroke-width="0.8" stroke-dasharray="1 1"/><circle cx="6.5" cy="6.5" r="1.9" fill="#1a9fdb"/><circle cx="6.5" cy="1.2" r="1.2" fill="#1a9fdb"/><circle cx="6.5" cy="11.8" r="1.2" fill="#1a9fdb"/><circle cx="1.2" cy="6.5" r="1.2" fill="#1a9fdb"/><circle cx="11.8" cy="6.5" r="1.2" fill="#1a9fdb"/></g></svg>
<svg class="a" style="left:749px;top:610px;" width="15" height="14" viewBox="0 0 15 14"><g transform="translate(0.5,0.5)"><path d="M11.8 7.6 A5.4 5.4 0 1 0 6.5 11.9" stroke="#a8a8a8" stroke-width="1" fill="none"/><path d="M10 6 H13.6 L11.8 9 Z" fill="#a8a8a8"/><circle cx="6.5" cy="6.5" r="0.9" fill="#a8a8a8"/></g></svg>
<svg class="a" style="left:774px;top:610px;" width="13" height="14" viewBox="0 0 13 14"><rect x="0.5" y="0.5" width="12" height="13" stroke="#707070" stroke-width="1" stroke-dasharray="1 1" fill="none"/><rect x="1" y="6.5" width="6.5" height="7" stroke="#a8a8a8" stroke-width="1" fill="#1f1f1f"/><path d="M7 6.5 L11 2.5" stroke="#a8a8a8" stroke-width="1"/><path d="M8.6 2 H11.6 V5 Z" fill="#a8a8a8"/></svg>
<div class="a" style="left:796px;top:609px;width:1px;height:16px;background:#5a5a5a;"></div>
<svg class="a" style="left:804px;top:610px;" width="14" height="14" viewBox="0 0 14 14"><g transform="translate(0,0.5)"><circle cx="6.5" cy="6.5" r="2" fill="#d0d0d0"/><path d="M0.5 0.5 L5 2.2 L2.2 5 Z M12.5 0.5 L8 2.2 L10.8 5 Z M0.5 12.5 L5 10.8 L2.2 8 Z M12.5 12.5 L8 10.8 L10.8 8 Z" fill="#d0d0d0"/></g></svg>
<div class="a" style="left:826px;top:609px;width:1px;height:16px;background:#5a5a5a;"></div>
<svg class="a" style="left:834px;top:610px;" width="15" height="13" viewBox="0 0 15 13"><path d="M2 11 L9.5 1" stroke="#1a9fdb" stroke-width="1" stroke-dasharray="1.4 0.8"/><path d="M2 11 H14" stroke="#1a9fdb" stroke-width="1" stroke-dasharray="1.6 1"/><path d="M0.5 11.5 L3.2 7.2 L5.6 11.8 Z" fill="#1a9fdb"/></svg>
<svg class="a" style="left:858px;top:610px;" width="14" height="14" viewBox="0 0 14 14"><path d="M0.5 4.2 L3.6 1.6 V3.5 H6.4 V4.900 H3.6 V6.800 Z" fill="#d0d0d0"/><path d="M6.200 4.200 L9.200 7.600" stroke="#d0d0d0" stroke-width="1.300"/><path d="M8.400 2.400 L13.200 0.800 V6.200 L10.400 6.600 Z" fill="#c4c4c4"/><path d="M8.600 8.200 L12.600 7.600 V12.600 L9.600 10.400 Z" fill="#9a9a9a"/></svg>
<svg class="a" style="left:884px;top:609px;" width="11" height="16" viewBox="0 0 11 16"><g transform="translate(0,0.5)"><path d="M5 0.6 C1.4 0.6 0.6 3.4 1.2 6 C1.8 8.6 3 9.6 3.4 11.6 H6.6 C7 9.6 8.2 8.6 8.8 6 C9.4 3.4 8.6 0.6 5 0.6 Z" stroke="#a8a8a8" stroke-width="1" fill="none"/><path d="M3.4 12 H6.6 L5 14.2 Z" fill="#a8a8a8"/></g></svg>
<svg class="a" style="left:908px;top:612px;" width="11" height="11" viewBox="0 0 11 11"><g transform="translate(0,0.5)"><path d="M0.5 0.5 H9.5 V9.5 H0.5 Z M3.5 0.5 V9.5 M6.5 0.5 V9.5 M0.5 3.5 H9.5 M0.5 6.5 H9.5" stroke="#1a7db2" stroke-width="1" fill="none"/></g></svg>
<svg class="a" style="left:1485px;top:610px;" width="13" height="14" viewBox="0 0 13 14"><g transform="translate(0.5,0.0)"><path d="M2.2 4.6 A4.6 4.6 0 1 1 2.6 10.2" stroke="#c4c4c4" stroke-width="1.2" fill="none"/><path d="M1.2 1.2 V5.4 H5.4 Z" fill="#c4c4c4"/></g></svg>
<svg class="a" style="left:1270px;top:638px;" width="70" height="46" viewBox="1270 638 70 46"><rect x="1300.6" y="660.4" width="18" height="1.3" fill="#ff0000"/><path d="M1317 659 H1324 L1326 658.2 H1330.5 L1332 659.6 V662.4 L1330.5 663.8 H1326 L1324 663 H1317 Z" fill="#ff0000"/><path d="M1274 661 L1275.5 658.8 H1280 L1281.6 660 V662 L1280 663.3 H1275.5 Z" fill="#ff0000"/><rect x="1297" y="647" width="1" height="11" fill="#008000"/><path d="M1294 641.5 L1295.5 640 H1299.5 L1301 641.5 V644.5 L1299.5 646 V652 H1295.5 V646 L1294 644.500 Z" fill="#008000"/><path d="M1293 648.500 L1294.500 647 H1296 V652.500 H1294.500 L1293 651 Z M1299 647 H1300.500 L1301.300 648 V651.500 L1300.500 652.500 H1299 Z" fill="#0000ff"/><rect x="1297" y="664" width="1" height="8" fill="#0000ff"/><path d="M1293.300 668.500 L1294.600 667 H1296 V671.500 H1294.500 Z M1299.500 667 H1300.800 L1301.300 668.500 L1300.500 671.500 H1299.500 Z" fill="#008000"/><path d="M1296 666 H1299 V672 L1300.800 674 V677 L1299.500 678.600 H1295.500 L1294 677 V674 L1296 672 Z" fill="#0000ff"/></svg>
<div class="a" style="left:1505px;top:67px;width:402px;height:21px;background:#1f1f1f;"></div>
<div class="a" style="left:1505px;top:67px;width:402px;height:2px;background:#dcdcdc;"></div>
<div class="a" style="left:1505px;top:67px;width:84px;height:2px;background:#dcdcdc;"></div>
<svg class="a" style="left:1510px;top:76px;" width="8" height="6" viewBox="0 0 8 6"><g transform="translate(0.3,0.7)"><path d="M0 0 H6.4 L3.2 4 Z" fill="#b4b4b4"/></g></svg>
<span class="a" style="top:72.3px;font-size:12px;line-height:17px;color:#fff;white-space:nowrap;letter-spacing:-0.556px;left:1527px;">COMPONENT</span>
<span class="a" style="top:112.3px;font-size:12px;line-height:17px;color:#fff;white-space:nowrap;letter-spacing:-0.129px;left:1513.2px;">Type</span>
<div class="a" style="left:1624px;top:104px;width:244px;height:29px;background:#323232;border:1px solid #1f1f1f;"></div>
<span class="a" style="top:109.7px;font-size:12px;line-height:17px;color:#fff;white-space:nowrap;letter-spacing:-0.305px;left:1630.2px;">View3D</span>
<span class="a" style="top:145.3px;font-size:12px;line-height:17px;color:#fff;white-space:nowrap;letter-spacing:-0.250px;left:1513.2px;">ID</span>
<div class="a" style="left:1624px;top:137px;width:237px;height:29px;background:#323232;border:1px solid #1f1f1f;"></div>
<span class="a" style="top:144.5px;font-size:12px;line-height:17px;color:#fff;white-space:nowrap;letter-spacing:-0.191px;left:1630.2px;">view3D</span>
<svg class="a" style="left:1871px;top:144px;" width="16" height="16" viewBox="0 0 16 16"><g transform="translate(0,0.5)"><path d="M2.6 3.4 A6.3 6.3 0 1 1 2.6 11.6" stroke="#f0f0f0" stroke-width="1.2" fill="none"/><path d="M1 7.5 H9.5" stroke="#f0f0f0" stroke-width="1.2"/><path d="M1 7.5 L4.5 5 V10 Z" fill="#e0e0e0"/></g></svg>
<span class="a" style="top:178.3px;font-size:12px;line-height:17px;color:#fff;white-space:nowrap;letter-spacing:-0.298px;left:1513.2px;">Custom ID</span>
<div class="a" style="left:1624px;top:170px;width:244px;height:29px;background:#323232;border:1px solid #1f1f1f;"></div>
<span class="a" style="top:176.5px;font-size:12px;line-height:17px;color:#fff;white-space:nowrap;letter-spacing:0.150px;left:1703.8px;">Add Annotation</span>
<div class="a" style="left:1505px;top:214px;width:402px;height:21px;background:#1f1f1f;"></div>
<svg class="a" style="left:1510px;top:222px;" width="8" height="6" viewBox="0 0 8 6"><g transform="translate(0.3,0.7)"><path d="M0 0 H6.4 L3.2 4 Z" fill="#b4b4b4"/></g></svg>
<span class="a" style="top:218.3px;font-size:12px;line-height:17px;color:#fff;white-space:nowrap;letter-spacing:-1.119px;left:1527px;">GEOMETRY</span>
<span class="a" style="top:258.1px;font-size:12px;line-height:17px;color:#fff;white-space:nowrap;letter-spacing:-0.149px;left:1513.2px;">Position</span>
<span class="a" style="top:258.1px;font-size:12px;line-height:17px;color:#fff;white-space:nowrap;left:1623.8px;">X</span>
<div class="a" style="left:1661px;top:250px;width:75px;height:29px;background:#323232;border:1px solid #1f1f1f;"></div>
<span class="a" style="top:257.1px;font-size:12px;line-height:17px;color:#2aafd3;white-space:nowrap;letter-spacing:-0.507px;left:1711.0px;">359</span>
<span class="a" style="top:258.1px;font-size:12px;line-height:17px;color:#fff;white-space:nowrap;left:1747.6px;">Y</span>
<div class="a" style="left:1785px;top:250px;width:75px;height:29px;background:#323232;border:1px solid #1f1f1f;"></div>
<span class="a" style="top:257.1px;font-size:12px;line-height:17px;color:#2aafd3;white-space:nowrap;letter-spacing:-0.210px;left:1835.0px;">116</span>
<span class="a" style="top:291.1px;font-size:12px;line-height:17px;color:#fff;white-space:nowrap;letter-spacing:-0.836px;left:1513.2px;">Size</span>
<span class="a" style="top:291.1px;font-size:12px;line-height:17px;color:#fff;white-space:nowrap;left:1623.8px;">W</span>
<div class="a" style="left:1661px;top:283px;width:75px;height:29px;background:#323232;border:1px solid #1f1f1f;"></div>
<span class="a" style="top:290.1px;font-size:12px;line-height:17px;color:#2aafd3;white-space:nowrap;letter-spacing:-0.507px;left:1711.0px;">400</span>
<span class="a" style="top:291.1px;font-size:12px;line-height:17px;color:#fff;white-space:nowrap;left:1747.6px;">H</span>
<div class="a" style="left:1785px;top:283px;width:75px;height:29px;background:#323232;border:1px solid #1f1f1f;"></div>
<span class="a" style="top:290.1px;font-size:12px;line-height:17px;color:#2aafd3;white-space:nowrap;letter-spacing:-0.507px;left:1835.0px;">400</span>
<div class="a" style="left:1505px;top:327px;width:402px;height:21px;background:#1f1f1f;"></div>
<svg class="a" style="left:1510px;top:335px;" width="8" height="6" viewBox="0 0 8 6"><g transform="translate(0.3,0.7)"><path d="M0 0 H6.4 L3.2 4 Z" fill="#b4b4b4"/></g></svg>
<span class="a" style="top:331.3px;font-size:12px;line-height:17px;color:#fff;white-space:nowrap;letter-spacing:-0.736px;left:1527px;">VISIBILITY</span>
<span class="a" style="top:371.2px;font-size:12px;line-height:17px;color:#fff;white-space:nowrap;letter-spacing:0.087px;left:1513.2px;">Visibility</span>
<div class="a" style="left:1645px;top:363px;width:29px;height:29px;background:#323232;border:1px solid #1f1f1f;"></div>
<svg class="a" style="left:1653px;top:371px;" width="13" height="11" viewBox="0 0 13 11"><path d="M1 5.5 L5 9.5 L12 1.5" stroke="#fff" stroke-width="2" fill="none"/></svg>
<span class="a" style="top:371.2px;font-size:12px;line-height:17px;color:#fff;white-space:nowrap;letter-spacing:-0.201px;left:1680.3px;">Is visible</span>
<div class="a" style="left:1763px;top:363px;width:29px;height:29px;background:#323232;border:1px solid #1f1f1f;"></div>
<span class="a" style="top:371.2px;font-size:12px;line-height:17px;color:#fff;white-space:nowrap;letter-spacing:-0.093px;left:1797.7px;">Clip</span>
<span class="a" style="top:404.2px;font-size:12px;line-height:17px;color:#fff;white-space:nowrap;letter-spacing:0.045px;left:1513.2px;">Opacity</span>
<div class="a" style="left:1645px;top:396px;width:95px;height:29px;background:#323232;border:1px solid #1f1f1f;"></div>
<span class="a" style="top:403.5px;font-size:12px;line-height:17px;color:#fff;white-space:nowrap;letter-spacing:-0.589px;left:1684.3px;">1,00</span>
<svg class="a" style="left:1719px;top:407px;" width="13" height="8" viewBox="0 0 13 8"><g transform="translate(0.2,0.0)"><path d="M0.5 0.5 L6 6 L11.5 0.5" stroke="#e0e0e0" stroke-width="1" fill="none"/></g></svg>
<div class="a" style="left:1505px;top:444px;width:402px;height:18px;background:#1f1f1f;"></div>
<div class="a" style="left:1505px;top:462px;width:402px;height:2px;background:#dcdcdc;"></div>
<div class="a" style="left:1505px;top:444px;width:134px;height:18px;background:#dcdcdc;"></div>
<span class="a" style="top:446.3px;font-size:12px;line-height:17px;color:#111;white-space:nowrap;font-weight:bold;letter-spacing:0.005px;left:1550.8px;">View3D</span>
<span class="a" style="top:446.3px;font-size:12px;line-height:17px;color:#fff;white-space:nowrap;font-weight:bold;letter-spacing:-0.472px;left:1688.2px;">Layout</span>
<span class="a" style="top:446.3px;font-size:12px;line-height:17px;color:#fff;white-space:nowrap;font-weight:bold;letter-spacing:-0.544px;left:1814.3px;">Advanced</span>
<div class="a" style="left:1505px;top:464px;width:402px;height:21px;background:#1f1f1f;"></div>
<svg class="a" style="left:1510px;top:472px;" width="8" height="6" viewBox="0 0 8 6"><g transform="translate(0.3,0.7)"><path d="M0 0 H6.4 L3.2 4 Z" fill="#b4b4b4"/></g></svg>
<span class="a" style="top:468.3px;font-size:12px;line-height:17px;color:#fff;white-space:nowrap;letter-spacing:-0.751px;left:1527px;">VIEW3D</span>
<span class="a" style="top:508.1px;font-size:12px;line-height:17px;color:#fff;white-space:nowrap;letter-spacing:-0.647px;left:1513.2px;">Camera</span>
<div class="a" style="left:1645px;top:500px;width:247px;height:29px;background:#323232;border:1px solid #1f1f1f;"></div>
<span class="a" style="top:507.1px;font-size:12px;line-height:17px;color:#fff;white-space:nowrap;letter-spacing:0.191px;left:1651px;">[None]</span>
<svg class="a" style="left:1870px;top:511px;" width="13" height="8" viewBox="0 0 13 8"><g transform="translate(0.8,0.0)"><path d="M0.5 0.5 L6 6 L11.5 0.5" stroke="#e0e0e0" stroke-width="1" fill="none"/></g></svg>
<span class="a" style="top:541.1px;font-size:12px;line-height:17px;color:#fff;white-space:nowrap;letter-spacing:-0.033px;left:1513.2px;">Environment</span>
<div class="a" style="left:1645px;top:533px;width:247px;height:29px;background:#323232;border:1px solid #1f1f1f;"></div>
<span class="a" style="top:540.1px;font-size:12px;line-height:17px;color:#2aafd3;white-space:nowrap;letter-spacing:-0.149px;left:1651px;">sceneEnvironment</span>
<svg class="a" style="left:1870px;top:544px;" width="13" height="8" viewBox="0 0 13 8"><g transform="translate(0.8,0.0)"><path d="M0.5 0.5 L6 6 L11.5 0.5" stroke="#e0e0e0" stroke-width="1" fill="none"/></g></svg>
<span class="a" style="top:574.1px;font-size:12px;line-height:17px;color:#fff;white-space:nowrap;letter-spacing:-0.197px;left:1513.2px;">Import Scene</span>
<div class="a" style="left:1645px;top:566px;width:247px;height:29px;background:#323232;border:1px solid #1f1f1f;"></div>
<span class="a" style="top:573.1px;font-size:12px;line-height:17px;color:#fff;white-space:nowrap;letter-spacing:0.191px;left:1651px;">[None]</span>
<svg class="a" style="left:1870px;top:577px;" width="13" height="8" viewBox="0 0 13 8"><g transform="translate(0.8,0.0)"><path d="M0.5 0.5 L6 6 L11.5 0.5" stroke="#e0e0e0" stroke-width="1" fill="none"/></g></svg>
<svg class="a" style="left:1628px;top:541px;" width="13" height="12" viewBox="0 0 13 12"><path d="M5.2 1.2 L8.6 0.6 Q10.6 0.4 10.8 2.4 L10.2 5.6 Q9.8 7.2 8.2 7.4 L6.6 7.6" stroke="#2aafd3" stroke-width="1.2" fill="none"/><path d="M6.4 4.4 L4.2 4.8 Q2.6 5.2 2.2 6.8 L1.6 9.6 Q1.4 11.4 3.4 11.2 L6 10.8 Q7.4 10.4 7.8 9 L8.2 6.8" stroke="#2aafd3" stroke-width="1.2" fill="none"/></svg>
<div class="a" style="left:1505px;top:798px;width:402px;height:1px;background:#2b2b2b;"></div>
<div class="a" style="left:1505px;top:818px;width:402px;height:1px;background:#1f1f1f;"></div>
<div class="a" style="left:1505px;top:819px;width:402px;height:22px;background:#333333;"></div>
<div class="a" style="left:1505px;top:819px;width:276px;height:22px;background:#1f1f1f;"></div>
<div class="a" style="left:1505px;top:841px;width:402px;height:2px;background:#dcdcdc;"></div>
<div class="a" style="left:1505px;top:819px;width:92px;height:22px;background:#dcdcdc;"></div>
<span class="a" style="top:822.7px;font-size:12px;line-height:17px;color:#111;white-space:nowrap;letter-spacing:0.117px;left:1517.0px;">Connections</span>
<span class="a" style="top:822.7px;font-size:12px;line-height:17px;color:#fff;white-space:nowrap;letter-spacing:-0.004px;left:1620.5px;">Bindings</span>
<span class="a" style="top:822.7px;font-size:12px;line-height:17px;color:#fff;white-space:nowrap;letter-spacing:0.231px;left:1706.2px;">Properties</span>
<div class="a" style="left:1505px;top:843px;width:402px;height:43px;background:#1f1f1f;"></div>
<svg class="a" style="left:1512px;top:849px;" width="12" height="12" viewBox="0 0 12 12"><path d="M6 0 V12 M0 6 H12" stroke="#d8d8d8" stroke-width="1.3"/></svg>
<svg class="a" style="left:1536px;top:849px;" width="12" height="12" viewBox="0 0 12 12"><path d="M0 6 H12" stroke="#5a5a5a" stroke-width="1.3"/></svg>
<span class="a" style="top:869.0px;font-size:12px;line-height:17px;color:#fff;white-space:nowrap;letter-spacing:-0.225px;left:1527.8px;">Target</span>
<div class="a" style="left:1584px;top:867px;width:1px;height:19px;background:#333;"></div>
<span class="a" style="top:869.0px;font-size:12px;line-height:17px;color:#fff;white-space:nowrap;letter-spacing:-0.194px;left:1626.0px;">Signal Handler</span>
<div class="a" style="left:1744px;top:867px;width:1px;height:19px;background:#333;"></div>
<span class="a" style="top:869.0px;font-size:12px;line-height:17px;color:#fff;white-space:nowrap;letter-spacing:-0.059px;left:1809.0px;">Action</span>
<div class="a" style="left:0px;top:23px;width:26px;height:1097px;background:#1f1f1f;"></div>
<svg class="a" style="left:0px;top:56px;" width="17" height="19" viewBox="0 0 17 19"><rect x="-3" y="0" width="19.5" height="19" fill="#b4b4b4"/><path d="M1 5.5 H12.5 M1 8.5 H9.5 M1 11.500 H12.5 M1 14.500 H8" stroke="#222" stroke-width="1.1"/></svg>
<div class="a" style="left:0px;top:85px;width:26px;height:38px;background:#000000;"></div>
<svg class="a" style="left:0px;top:92px;overflow:hidden;" width="18" height="24" viewBox="0 0 18 24"><path d="M-4 21 L10 7 L14 11 L0 25 Z" fill="#e07d10"/><path d="M11.200 5.800 L13.400 3.600 L17.400 7.600 L15.200 9.800 Z" fill="#e07d10"/></svg>
<svg class="a" style="left:0px;top:129px;overflow:hidden;" width="19" height="23" viewBox="0 0 19 23"><g transform="translate(0,0.5)"><path d="M6 2 C9 2 11 4 11.500 6.500 C13 8 13.500 10.500 13.500 12.500 C13.500 17 10.500 20.500 6 20.500 C3 20.500 0.500 19 -1 16.500 V5 C0.500 3 3 2 6 2 Z" fill="#a6a6a6"/><path d="M6.200 7 V20.500" stroke="#1f1f1f" stroke-width="1.2"/><path d="M-1 7.200 H12" stroke="#1f1f1f" stroke-width="1.2"/><path d="M13 9.500 L16 8 M13.600 13 H16.600 M12.500 16.800 L15.500 18.500" stroke="#a6a6a6" stroke-width="1.4"/></g></svg>
<svg class="a" style="left:0px;top:170px;overflow:hidden;" width="18" height="22" viewBox="0 0 18 22"><path d="M-2 18 L8.300 7.700" stroke="#a6a6a6" stroke-width="3.6"/><path d="M15.800 4.200 L12.600 7.400 L10 6.800 L9.400 4.200 L12.600 1 C10.400 0.200 8 0.800 6.600 2.400 C5 4.200 4.800 6.600 5.800 8.600 L9 11.400 C11 12.200 13.400 11.800 15 10.200 C16.600 8.600 17 6.200 15.800 4.200 Z" fill="#a6a6a6"/></svg>
<svg class="a" style="left:0px;top:206px;overflow:hidden;" width="19" height="25" viewBox="0 0 19 25"><g transform="translate(0,0.5)"><circle cx="6.500" cy="12" r="10.500" fill="#a6a6a6"/><text x="2.200" y="17.300" font-family="Liberation Sans, sans-serif" font-weight="bold" font-size="15" fill="#1f1f1f">?</text></g></svg>
<div class="a" style="left:0px;top:986px;width:26px;height:1px;background:#4a4a4a;"></div>
<svg class="a" style="left:0px;top:1000px;overflow:hidden;" width="26" height="25" viewBox="0 0 26 25"><rect x="-3" y="0.800" width="21.300" height="16.400" rx="1.500" stroke="#b0b0b0" stroke-width="1.600" fill="#454545"/><path d="M2.800 23.500 L6 18 H8.500 L11.800 23.500 Z" fill="#b0b0b0"/><path d="M21.300 9 L24 11.300 L21.300 13.600 Z" fill="#c8c8c8"/></svg>
<svg class="a" style="left:0px;top:1036px;overflow:hidden;" width="18" height="26" viewBox="0 0 18 26"><path d="M-4 0 L16 12.500 L-4 25 Z" fill="#86bf60"/></svg>
<svg class="a" style="left:0px;top:1074px;overflow:hidden;" width="18" height="28" viewBox="0 0 18 28"><path d="M-4 0 L16 12.500 L-4 25 Z" fill="#86bf60"/><ellipse cx="10.500" cy="19.500" rx="3.800" ry="4.800" fill="#dcdcdc" stroke="#1f1f1f" stroke-width="1"/><path d="M10.500 15 V24" stroke="#1f1f1f" stroke-width="0.900"/><path d="M5 16 L7 17.500 M4.500 20 H6.700 M5 24 L7 22.500 M16 16 L14 17.500 M16.500 20 H14.300 M16 24 L14 22.500" stroke="#dcdcdc" stroke-width="1.100"/><circle cx="10.500" cy="14.600" r="1.700" fill="#dcdcdc"/></svg>
<svg class="a" style="left:0px;top:1112px;overflow:hidden;" width="20" height="29" viewBox="0 0 20 29"><path d="M-2 22 L9 9" stroke="#6e6e6e" stroke-width="3.200"/><path d="M6 4 L11 1.500 L18.500 9 L15.500 12 L11.500 8.500 L9 9.500 Z" fill="#6e6e6e"/></svg>
<div class="a" style="left:27px;top:1120px;width:1880px;height:1px;background:#2b2b2b;"></div>
<div class="a" style="left:27px;top:1121px;width:1880px;height:20px;background:#1f1f1f;"></div>
<svg class="a" style="left:35px;top:1129px;" width="11" height="12" viewBox="0 0 11 12"><rect x="0.500" y="0.500" width="10" height="11" stroke="#7a7a7a" stroke-width="1" fill="none"/><rect x="0.500" y="0.500" width="4.500" height="11" fill="#7a7a7a"/></svg>
<div class="a" style="left:59px;top:1124px;width:200px;height:17px;background:#262626;"></div>
<svg class="a" style="left:65px;top:1127px;" width="16" height="14" viewBox="0 0 16 14"><circle cx="8.500" cy="5.500" r="4.300" stroke="#9a9a9a" stroke-width="1.200" fill="none"/><path d="M5.300 8.700 L0.500 13.500" stroke="#9a9a9a" stroke-width="1.400"/><path d="M10.500 12 H14 L12.250 13.800 Z" fill="#9a9a9a"/></svg>
<span class="a" style="top:1127.5px;font-size:12px;line-height:17px;color:#4c4c4c;white-space:nowrap;letter-spacing:-0.096px;left:86.3px;">Type to locate (Ctrl+K)</span>
<div class="a" style="left:262px;top:1124px;width:1px;height:17px;background:#4a4a4a;"></div>
<span class="a" style="top:1127.5px;font-size:12px;line-height:17px;color:#e0e0e0;white-space:nowrap;left:272.8px;">1</span>
<span class="a" style="top:1127.5px;font-size:12px;line-height:17px;color:#e0e0e0;white-space:nowrap;letter-spacing:-0.747px;left:286.5px;">Issues</span>
<span class="a" style="top:1127.5px;font-size:12px;line-height:17px;color:#e0e0e0;white-space:nowrap;left:334.3px;">2</span>
<span class="a" style="top:1127.5px;font-size:12px;line-height:17px;color:#e0e0e0;white-space:nowrap;letter-spacing:-0.469px;left:348px;">Search Results</span>
<span class="a" style="top:1127.5px;font-size:12px;line-height:17px;color:#e0e0e0;white-space:nowrap;left:440.9px;">3</span>
<span class="a" style="top:1127.5px;font-size:12px;line-height:17px;color:#e0e0e0;white-space:nowrap;letter-spacing:0.191px;left:454px;">Application Output</span>
<span class="a" style="top:1127.5px;font-size:12px;line-height:17px;color:#e0e0e0;white-space:nowrap;left:573.6px;">5</span>
<span class="a" style="top:1127.5px;font-size:12px;line-height:17px;color:#e0e0e0;white-space:nowrap;letter-spacing:-0.098px;left:587px;">QML Debugger Console</span>
<span class="a" style="top:1127.5px;font-size:12px;line-height:17px;color:#e0e0e0;white-space:nowrap;left:731.2px;">6</span>
<span class="a" style="top:1127.5px;font-size:12px;line-height:17px;color:#e0e0e0;white-space:nowrap;letter-spacing:-0.470px;left:745.5px;">General Messages</span>
<svg class="a" style="left:857px;top:1130px;" width="9" height="11" viewBox="0 0 9 11"><g transform="translate(0.5,0)"><path d="M0 4 L4 0 L8 4 Z M0 6 L4 10 L8 6 Z" fill="#c8c8c8"/></g></svg>
<div class="a" style="left:1853px;top:1124px;width:24px;height:17px;background:#151515;"></div>
<svg class="a" style="left:1857px;top:1127px;" width="16" height="12" viewBox="0 0 16 12"><path d="M10 4.300 L12.700 1.500 L15.400 4.300 Z" fill="#d0d0d0"/><rect x="1" y="7.300" width="14" height="3.700" rx="1" stroke="#d0d0d0" stroke-width="1" fill="#8a8a8a"/><rect x="10.500" y="8.300" width="3.500" height="1.800" fill="#1f1f1f"/></svg>
<svg class="a" style="left:1890px;top:1129px;" width="11" height="12" viewBox="0 0 11 12"><rect x="0.500" y="0.500" width="10" height="11" stroke="#7a7a7a" stroke-width="1" fill="none"/><rect x="5.500" y="0.500" width="5" height="11" fill="#7a7a7a"/></svg>
</body></html>
